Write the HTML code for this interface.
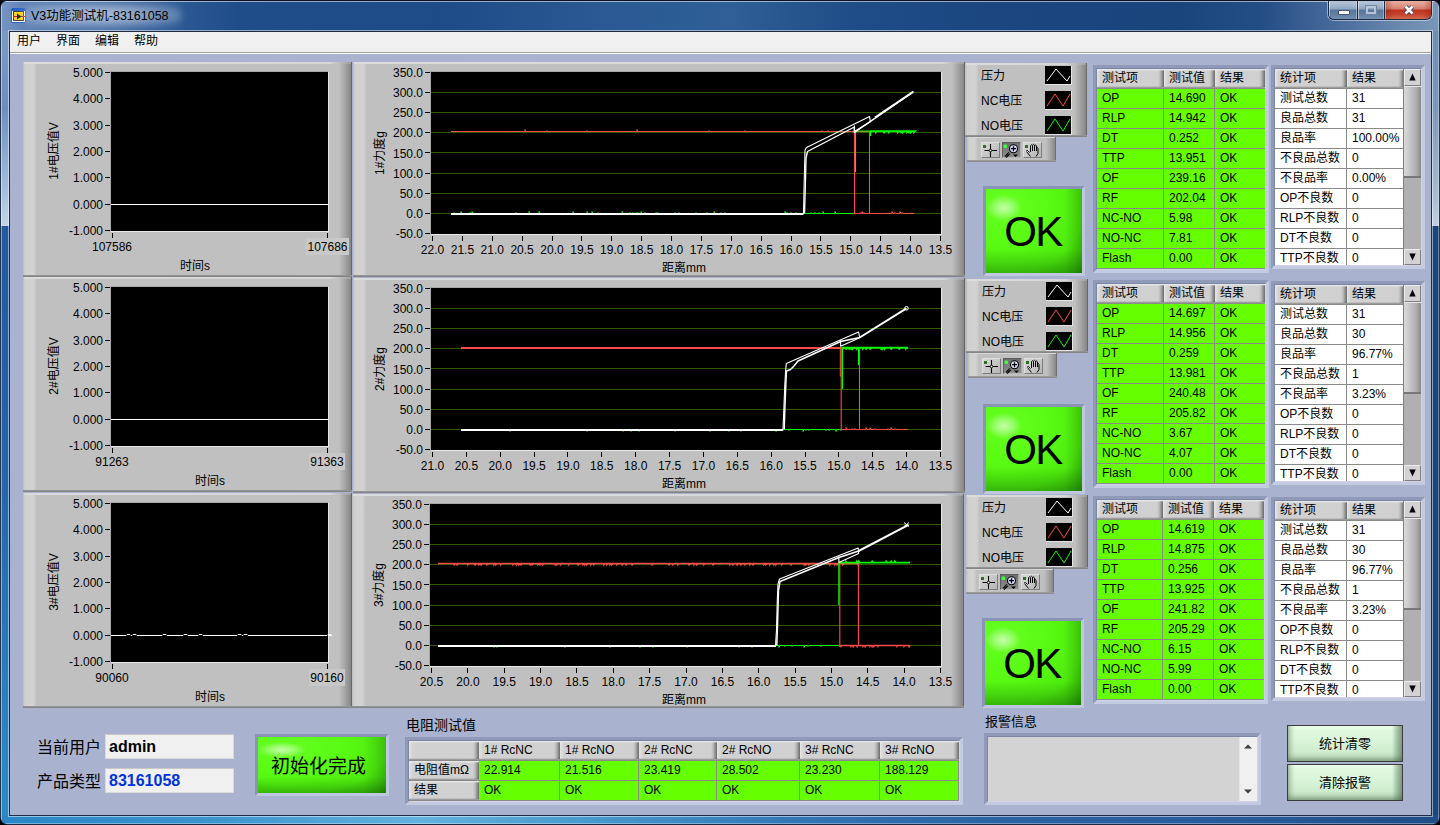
<!DOCTYPE html><html><head><meta charset="utf-8"><title>V3功能测试机-83161058</title><style>
html,body{margin:0;padding:0}
body{width:1440px;height:825px;overflow:hidden;position:relative;background:#1c4478;font-family:"Liberation Sans","Noto Sans CJK SC",sans-serif;font-size:12px;color:#000}
div{position:absolute;box-sizing:border-box}
svg{position:absolute;overflow:visible}
.t{white-space:nowrap}
.tr{white-space:nowrap;text-align:right}
.tc{white-space:nowrap;text-align:center}
.panel{background:#c0c0c0}
.hdr{background:linear-gradient(to right,#e6e6e6 0,#dadada 2px,#d1d1d1 4px,#d0d0d0 calc(100% - 6px),#bdbdbd calc(100% - 4px),#949494 calc(100% - 2px),#6a6a6a 100%);box-shadow:inset 0 1px 0 #e4e4e4,inset 0 2px 0 rgba(255,255,255,.25),inset 0 -1px 0 #9c9c9c,inset 0 -2px 0 rgba(0,0,0,.08);white-space:nowrap;overflow:hidden;font-size:12px;line-height:18px;padding-left:5px}
.cell{white-space:nowrap;overflow:hidden;font-size:12px;line-height:19px;padding-left:5px}
</style></head><body>
<div style="left:0;top:0;width:1440px;height:31px;background:linear-gradient(to right,#7896c4 0,#5e82b6 25px,#4d73aa 110px,#2b5893 185px,#1f4d89 240px,#1d4b87 440px,#2a5993 600px,#2f5f96 730px,#1e4c86 860px,#1b4680 1000px,#1a447c 1180px,#234d85 1260px,#46689a 1330px,#6a89ae 1400px,#7a97b8 1440px)"></div>
<div style="left:0;top:0;width:1440px;height:1px;background:#20304a"></div>
<div style="left:1px;top:1px;width:1438px;height:1px;background:rgba(255,255,255,.55)"></div>
<div style="left:0;top:31px;width:9px;height:195px;background:linear-gradient(to bottom,#7c9ac6 0,#6d8fc0 40%,#a9c2de 85%,#c4d6e8 100%)"></div>
<div style="left:0;top:226px;width:9px;height:599px;background:linear-gradient(to bottom,#23599f 0,#2463ab 40%,#2b80c0 80%,#2c8ac8 100%)"></div>
<div style="left:1431px;top:31px;width:9px;height:195px;background:linear-gradient(to bottom,#6d8db4 0,#7b98ba 40%,#a9bdd3 85%,#c0d0e0 100%)"></div>
<div style="left:1431px;top:226px;width:9px;height:599px;background:#1c4579"></div>
<div style="left:0;top:815px;width:1440px;height:10px;background:linear-gradient(to right,#2b86c6 0,#3a93cd 200px,#62b2de 420px,#4697cc 600px,#3276b4 800px,#2c62a2 1000px,#285a9a 1250px,#1e4c87 1440px)"></div>
<div style="left:0;top:0;width:1px;height:825px;background:#26344e"></div>
<div style="left:1439px;top:0;width:1px;height:825px;background:#26344e"></div>
<div style="left:0;top:824px;width:1440px;height:1px;background:#1a2a44"></div>
<div style="left:1px;top:1px;width:1px;height:823px;background:rgba(255,255,255,.45)"></div>
<div style="left:1438px;top:1px;width:1px;height:823px;background:rgba(255,255,255,.35)"></div>
<div style="left:1px;top:823px;width:1438px;height:1px;background:rgba(255,255,255,.35)"></div>
<div style="left:0px;top:0px;width:7px;height:7px;background:radial-gradient(circle at 100% 100%,rgba(0,0,0,0) 5.5px,rgba(20,28,44,.9) 6.2px,#000 7.2px)"></div>
<div style="left:1433px;top:0px;width:7px;height:7px;background:radial-gradient(circle at 0 100%,rgba(0,0,0,0) 5.5px,rgba(20,28,44,.9) 6.2px,#000 7.2px)"></div>
<div style="left:0px;top:818px;width:7px;height:7px;background:radial-gradient(circle at 100% 0,rgba(0,0,0,0) 5.5px,rgba(20,28,44,.9) 6.2px,#000 7.2px)"></div>
<div style="left:1433px;top:818px;width:7px;height:7px;background:radial-gradient(circle at 0 0,rgba(0,0,0,0) 5.5px,rgba(20,28,44,.9) 6.2px,#000 7.2px)"></div>
<div style="left:9px;top:31px;width:1423px;height:785px;border:1px solid #1e2c44;box-shadow:0 0 0 1px rgba(255,255,255,.5)"></div>
<div style="left:11px;top:8px;width:15px;height:15px;background:#fff;border:1px solid #2a62c8;border-radius:1px"></div>
<div style="left:13px;top:11px;width:11px;height:10px;background:#f4d31c;border:1px solid #444"></div>
<svg style="left:11px;top:8px" width="15" height="15"><path d="M6 5.5 L10.5 8.5 L6 11.5Z" fill="#222"/><path d="M2 8.5H6M10 8.5H14" stroke="#d02020" stroke-width="1"/><rect x="1" y="1" width="13" height="2" fill="#2a62c8"/></svg>
<div style="left:22px;top:4px;width:160px;height:22px;border-radius:11px;background:radial-gradient(ellipse at center,rgba(255,255,255,.55) 0,rgba(255,255,255,.35) 50%,rgba(255,255,255,0) 100%);filter:blur(3px)"></div>
<div class="t" style="left:31px;top:7.8px;font-size:12.5px;line-height:16.5px;color:#000">V3功能测试机-83161058</div>
<div style="left:1328px;top:0;width:104px;height:20px;border:1px solid #1d2c44;border-top:none;border-radius:0 0 6px 6px;overflow:hidden;box-shadow:0 0 0 1px rgba(255,255,255,.45)"><div style="left:0;top:0;width:29px;height:19px;background:linear-gradient(to bottom,#b9c8da 0,#a3b6cd 30%,#8ea5c1 48%,#58769a 52%,#5f7ea2 75%,#7391b2 100%);border-right:1px solid #1d2c44;box-shadow:inset 1px 0 0 rgba(255,255,255,.5),inset -1px 0 0 rgba(255,255,255,.35)"></div><div style="left:29px;top:0;width:27px;height:19px;background:linear-gradient(to bottom,#b9c8da 0,#a3b6cd 30%,#8ea5c1 48%,#58769a 52%,#5f7ea2 75%,#7391b2 100%);border-right:1px solid #1d2c44;box-shadow:inset 1px 0 0 rgba(255,255,255,.5),inset -1px 0 0 rgba(255,255,255,.35)"></div><div style="left:56px;top:0;width:47px;height:19px;background:linear-gradient(to right,rgba(120,20,10,.35) 0,rgba(120,20,10,0) 18%,rgba(120,20,10,0) 82%,rgba(120,20,10,.35) 100%),linear-gradient(to bottom,#eab4a6 0,#de9585 30%,#d47c6b 48%,#bf3423 52%,#c5422c 75%,#d3694a 100%);box-shadow:inset 1px 0 0 rgba(255,255,255,.45),inset -1px 0 0 rgba(255,255,255,.3)"></div></div>
<div style="left:1338px;top:10px;width:12px;height:5px;background:#fff;border:1px solid #47556e;border-radius:1px"></div>
<div style="left:1366px;top:6px;width:10px;height:8px;border:2px solid #bccada;outline:1px solid #71829e;opacity:.9"></div>
<svg style="left:1402px;top:4px" width="14" height="12"><path d="M3.500 2.500 L10.500 9.500 M10.500 2.500 L3.500 9.500" stroke="#3a3f52" stroke-width="4.400" stroke-linecap="butt"/><path d="M3.500 2.500 L10.500 9.500 M10.500 2.500 L3.500 9.500" stroke="#fff" stroke-width="2.600" stroke-linecap="butt"/></svg>
<div style="left:0;top:0;width:1440px;height:1px;background:#0c1220"></div>
<div style="left:10px;top:32px;width:1421px;height:783px;background:#a9b3cf;overflow:hidden"></div>
<div style="left:10px;top:32px;width:1421px;height:20px;background:#f0f0f0"></div>
<div style="left:10px;top:52px;width:1421px;height:1px;background:#a0a0a0"></div>
<div style="left:10px;top:53px;width:1421px;height:1px;background:#fff"></div>
<div class="t" style="left:17px;top:33.0px;font-size:12px;line-height:16px;">用户</div>
<div class="t" style="left:56px;top:33.0px;font-size:12px;line-height:16px;">界面</div>
<div class="t" style="left:95px;top:33.0px;font-size:12px;line-height:16px;">编辑</div>
<div class="t" style="left:134px;top:33.0px;font-size:12px;line-height:16px;">帮助</div>
<div class="panel" style="left:23px;top:62px;width:329px;height:215px;overflow:hidden"><div style="left:0;top:0;width:13px;height:215px;background:linear-gradient(to right,#bcbcbc 0,#d0d0d0 2px,#d3d3d3 10px,#c6c6c6 13px)"></div><div style="left:316px;top:0;width:13px;height:215px;background:linear-gradient(to right,#c0c0c0 0,#a8a8a8 40%,#868686 92%,#4a4a4a 100%)"></div><div style="left:1px;top:0;width:327px;height:2px;background:linear-gradient(to right,#dcdcdc 0,#d6d6d6 306px,#a0a0a0 100%)"></div><div style="left:0;top:213px;width:329px;height:2px;background:linear-gradient(to bottom,#9a9a9a,#7e7e7e)"></div></div>
<div style="left:111px;top:72px;width:217px;height:159px;background:#000"></div>
<div style="left:328px;top:72px;width:1px;height:160px;background:#e6e6e6"></div>
<div style="left:111px;top:231px;width:218px;height:1px;background:#e6e6e6"></div>
<div style="left:110px;top:71px;width:218px;height:1px;background:#a6a6a6"></div>
<div style="left:110px;top:71px;width:1px;height:160px;background:#a6a6a6"></div>
<div class="tr" style="left:42px;top:65.0px;width:61px;height:16px;line-height:16px;font-size:12px">5.000</div>
<div style="left:105px;top:72px;width:5px;height:1px;background:#000"></div>
<div class="tr" style="left:42px;top:91.3px;width:61px;height:16px;line-height:16px;font-size:12px">4.000</div>
<div style="left:105px;top:98px;width:5px;height:1px;background:#000"></div>
<div class="tr" style="left:42px;top:117.7px;width:61px;height:16px;line-height:16px;font-size:12px">3.000</div>
<div style="left:105px;top:125px;width:5px;height:1px;background:#000"></div>
<div class="tr" style="left:42px;top:144.0px;width:61px;height:16px;line-height:16px;font-size:12px">2.000</div>
<div style="left:105px;top:151px;width:5px;height:1px;background:#000"></div>
<div class="tr" style="left:42px;top:170.3px;width:61px;height:16px;line-height:16px;font-size:12px">1.000</div>
<div style="left:105px;top:177px;width:5px;height:1px;background:#000"></div>
<div class="tr" style="left:42px;top:196.7px;width:61px;height:16px;line-height:16px;font-size:12px">0.000</div>
<div style="left:105px;top:204px;width:5px;height:1px;background:#000"></div>
<div class="tr" style="left:42px;top:223.0px;width:61px;height:16px;line-height:16px;font-size:12px">-1.000</div>
<div style="left:105px;top:230px;width:5px;height:1px;background:#000"></div>
<div style="left:111px;top:204px;width:217px;height:1px;background:#fff"></div>
<div style="left:112px;top:233px;width:1px;height:5px;background:#000"></div>
<div style="left:327px;top:233px;width:1px;height:5px;background:#000"></div>
<div class="tc" style="left:82px;top:239px;width:60px;height:16px;line-height:16px;font-size:12px">107586</div>
<div class="tc" style="left:306px;top:238px;width:43px;height:17px;line-height:18px;font-size:12px;background:#c8c8c8">107686</div>
<div class="tc" style="left:165px;top:258px;width:60px;height:16px;line-height:16px;font-size:12px">时间s</div>
<div class="tc" style="left:-6px;top:143px;width:120px;height:16px;line-height:16px;font-size:12px;transform:rotate(-90deg)">1#电压值V</div>
<div class="panel" style="left:23px;top:277px;width:329px;height:215px;overflow:hidden"><div style="left:0;top:0;width:13px;height:215px;background:linear-gradient(to right,#bcbcbc 0,#d0d0d0 2px,#d3d3d3 10px,#c6c6c6 13px)"></div><div style="left:316px;top:0;width:13px;height:215px;background:linear-gradient(to right,#c0c0c0 0,#a8a8a8 40%,#868686 92%,#4a4a4a 100%)"></div><div style="left:1px;top:0;width:327px;height:2px;background:linear-gradient(to right,#dcdcdc 0,#d6d6d6 306px,#a0a0a0 100%)"></div><div style="left:0;top:213px;width:329px;height:2px;background:linear-gradient(to bottom,#9a9a9a,#7e7e7e)"></div></div>
<div style="left:111px;top:287px;width:217px;height:159px;background:#000"></div>
<div style="left:328px;top:287px;width:1px;height:160px;background:#e6e6e6"></div>
<div style="left:111px;top:446px;width:218px;height:1px;background:#e6e6e6"></div>
<div style="left:110px;top:286px;width:218px;height:1px;background:#a6a6a6"></div>
<div style="left:110px;top:286px;width:1px;height:160px;background:#a6a6a6"></div>
<div class="tr" style="left:42px;top:280.0px;width:61px;height:16px;line-height:16px;font-size:12px">5.000</div>
<div style="left:105px;top:287px;width:5px;height:1px;background:#000"></div>
<div class="tr" style="left:42px;top:306.3px;width:61px;height:16px;line-height:16px;font-size:12px">4.000</div>
<div style="left:105px;top:313px;width:5px;height:1px;background:#000"></div>
<div class="tr" style="left:42px;top:332.7px;width:61px;height:16px;line-height:16px;font-size:12px">3.000</div>
<div style="left:105px;top:340px;width:5px;height:1px;background:#000"></div>
<div class="tr" style="left:42px;top:359.0px;width:61px;height:16px;line-height:16px;font-size:12px">2.000</div>
<div style="left:105px;top:366px;width:5px;height:1px;background:#000"></div>
<div class="tr" style="left:42px;top:385.3px;width:61px;height:16px;line-height:16px;font-size:12px">1.000</div>
<div style="left:105px;top:392px;width:5px;height:1px;background:#000"></div>
<div class="tr" style="left:42px;top:411.7px;width:61px;height:16px;line-height:16px;font-size:12px">0.000</div>
<div style="left:105px;top:419px;width:5px;height:1px;background:#000"></div>
<div class="tr" style="left:42px;top:438.0px;width:61px;height:16px;line-height:16px;font-size:12px">-1.000</div>
<div style="left:105px;top:445px;width:5px;height:1px;background:#000"></div>
<div style="left:111px;top:419px;width:217px;height:1px;background:#fff"></div>
<div style="left:112px;top:448px;width:1px;height:5px;background:#000"></div>
<div style="left:327px;top:448px;width:1px;height:5px;background:#000"></div>
<div class="tc" style="left:82px;top:454px;width:60px;height:16px;line-height:16px;font-size:12px">91263</div>
<div class="tc" style="left:309px;top:453px;width:36px;height:17px;line-height:18px;font-size:12px;background:#c8c8c8">91363</div>
<div class="tc" style="left:180px;top:473px;width:60px;height:16px;line-height:16px;font-size:12px">时间s</div>
<div class="tc" style="left:-6px;top:358px;width:120px;height:16px;line-height:16px;font-size:12px;transform:rotate(-90deg)">2#电压值V</div>
<div class="panel" style="left:23px;top:493px;width:329px;height:215px;overflow:hidden"><div style="left:0;top:0;width:13px;height:215px;background:linear-gradient(to right,#bcbcbc 0,#d0d0d0 2px,#d3d3d3 10px,#c6c6c6 13px)"></div><div style="left:316px;top:0;width:13px;height:215px;background:linear-gradient(to right,#c0c0c0 0,#a8a8a8 40%,#868686 92%,#4a4a4a 100%)"></div><div style="left:1px;top:0;width:327px;height:2px;background:linear-gradient(to right,#dcdcdc 0,#d6d6d6 306px,#a0a0a0 100%)"></div><div style="left:0;top:213px;width:329px;height:2px;background:linear-gradient(to bottom,#9a9a9a,#7e7e7e)"></div></div>
<div style="left:111px;top:503px;width:217px;height:159px;background:#000"></div>
<div style="left:328px;top:503px;width:1px;height:160px;background:#e6e6e6"></div>
<div style="left:111px;top:662px;width:218px;height:1px;background:#e6e6e6"></div>
<div style="left:110px;top:502px;width:218px;height:1px;background:#a6a6a6"></div>
<div style="left:110px;top:502px;width:1px;height:160px;background:#a6a6a6"></div>
<div class="tr" style="left:42px;top:496.0px;width:61px;height:16px;line-height:16px;font-size:12px">5.000</div>
<div style="left:105px;top:503px;width:5px;height:1px;background:#000"></div>
<div class="tr" style="left:42px;top:522.3px;width:61px;height:16px;line-height:16px;font-size:12px">4.000</div>
<div style="left:105px;top:529px;width:5px;height:1px;background:#000"></div>
<div class="tr" style="left:42px;top:548.7px;width:61px;height:16px;line-height:16px;font-size:12px">3.000</div>
<div style="left:105px;top:556px;width:5px;height:1px;background:#000"></div>
<div class="tr" style="left:42px;top:575.0px;width:61px;height:16px;line-height:16px;font-size:12px">2.000</div>
<div style="left:105px;top:582px;width:5px;height:1px;background:#000"></div>
<div class="tr" style="left:42px;top:601.3px;width:61px;height:16px;line-height:16px;font-size:12px">1.000</div>
<div style="left:105px;top:608px;width:5px;height:1px;background:#000"></div>
<div class="tr" style="left:42px;top:627.7px;width:61px;height:16px;line-height:16px;font-size:12px">0.000</div>
<div style="left:105px;top:635px;width:5px;height:1px;background:#000"></div>
<div class="tr" style="left:42px;top:654.0px;width:61px;height:16px;line-height:16px;font-size:12px">-1.000</div>
<div style="left:105px;top:661px;width:5px;height:1px;background:#000"></div>
<svg style="left:0;top:0" width="1440" height="825"><polyline points="111,635.5 114,635.5 117,635.5 120,635.5 123,635.5 126,635.5 127,634.5 130,634.5 131,635.5 132,635.5 133,634.5 136,634.5 137,635.5 138,635.5 141,635.5 144,635.5 147,635.5 150,635.5 153,635.5 156,635.5 159,635.5 162,635.5 163,634.5 166,634.5 167,635.5 168,635.5 171,635.5 174,635.5 177,635.5 180,635.5 183,635.5 184,634.5 187,634.5 188,635.5 189,635.5 192,635.5 195,635.5 198,635.5 199,634.5 202,634.5 203,635.5 204,635.5 207,635.5 210,635.5 213,635.5 216,635.5 219,635.5 222,635.5 225,635.5 228,635.5 231,635.5 234,635.5 237,635.5 238,634.5 241,634.5 242,635.5 243,635.5 244,634.5 247,634.5 248,635.5 249,635.5 252,635.5 255,635.5 258,635.5 261,635.5 264,635.5 267,635.5 270,635.5 273,635.5 276,635.5 279,635.5 282,635.5 285,635.5 288,635.5 291,635.5 294,635.5 297,635.5 300,635.5 303,635.5 306,635.5 309,635.5 312,635.5 315,635.5 318,635.5 321,635.5 324,635.5 327,635.5 328,634.5 331,634.5 332,635.5 328,635.5" fill="none" stroke="#fff" stroke-width="1"/></svg>
<div style="left:112px;top:664px;width:1px;height:5px;background:#000"></div>
<div style="left:327px;top:664px;width:1px;height:5px;background:#000"></div>
<div class="tc" style="left:82px;top:670px;width:60px;height:16px;line-height:16px;font-size:12px">90060</div>
<div class="tc" style="left:309px;top:669px;width:36px;height:17px;line-height:18px;font-size:12px;background:#c8c8c8">90160</div>
<div class="tc" style="left:180px;top:689px;width:60px;height:16px;line-height:16px;font-size:12px">时间s</div>
<div class="tc" style="left:-6px;top:574px;width:120px;height:16px;line-height:16px;font-size:12px;transform:rotate(-90deg)">3#电压值V</div>
<div class="panel" style="left:353px;top:62px;width:612px;height:215px;overflow:hidden"><div style="left:0;top:0;width:13px;height:215px;background:linear-gradient(to right,#bcbcbc 0,#d0d0d0 2px,#d3d3d3 10px,#c6c6c6 13px)"></div><div style="left:599px;top:0;width:13px;height:215px;background:linear-gradient(to right,#c0c0c0 0,#a8a8a8 40%,#868686 92%,#4a4a4a 100%)"></div><div style="left:1px;top:0;width:610px;height:2px;background:linear-gradient(to right,#dcdcdc 0,#d6d6d6 589px,#a0a0a0 100%)"></div><div style="left:0;top:213px;width:612px;height:2px;background:linear-gradient(to bottom,#9a9a9a,#7e7e7e)"></div></div>
<div style="left:431px;top:72px;width:510px;height:162px;background:#000"></div>
<div style="left:941px;top:72px;width:1px;height:163px;background:#e6e6e6"></div>
<div style="left:431px;top:234px;width:511px;height:1px;background:#e6e6e6"></div>
<div style="left:430px;top:71px;width:511px;height:1px;background:#a6a6a6"></div>
<div style="left:430px;top:71px;width:1px;height:163px;background:#a6a6a6"></div>
<div class="tr" style="left:363px;top:65.0px;width:60px;height:16px;line-height:16px;font-size:12px">350.0</div>
<div style="left:425px;top:72px;width:5px;height:1px;background:#000"></div>
<div class="tr" style="left:363px;top:85.1px;width:60px;height:16px;line-height:16px;font-size:12px">300.0</div>
<div style="left:425px;top:92px;width:5px;height:1px;background:#000"></div>
<div style="left:431px;top:92px;width:510px;height:1px;background:#2b5a00"></div>
<div class="tr" style="left:363px;top:105.2px;width:60px;height:16px;line-height:16px;font-size:12px">250.0</div>
<div style="left:425px;top:112px;width:5px;height:1px;background:#000"></div>
<div style="left:431px;top:112px;width:510px;height:1px;background:#2b5a00"></div>
<div class="tr" style="left:363px;top:125.4px;width:60px;height:16px;line-height:16px;font-size:12px">200.0</div>
<div style="left:425px;top:132px;width:5px;height:1px;background:#000"></div>
<div style="left:431px;top:132px;width:510px;height:1px;background:#2b5a00"></div>
<div class="tr" style="left:363px;top:145.5px;width:60px;height:16px;line-height:16px;font-size:12px">150.0</div>
<div style="left:425px;top:152px;width:5px;height:1px;background:#000"></div>
<div style="left:431px;top:152px;width:510px;height:1px;background:#2b5a00"></div>
<div class="tr" style="left:363px;top:165.6px;width:60px;height:16px;line-height:16px;font-size:12px">100.0</div>
<div style="left:425px;top:173px;width:5px;height:1px;background:#000"></div>
<div style="left:431px;top:173px;width:510px;height:1px;background:#2b5a00"></div>
<div class="tr" style="left:363px;top:185.8px;width:60px;height:16px;line-height:16px;font-size:12px">50.0</div>
<div style="left:425px;top:193px;width:5px;height:1px;background:#000"></div>
<div style="left:431px;top:193px;width:510px;height:1px;background:#2b5a00"></div>
<div class="tr" style="left:363px;top:205.9px;width:60px;height:16px;line-height:16px;font-size:12px">0.0</div>
<div style="left:425px;top:213px;width:5px;height:1px;background:#000"></div>
<div style="left:431px;top:213px;width:510px;height:1px;background:#2b5a00"></div>
<div class="tr" style="left:363px;top:226.0px;width:60px;height:16px;line-height:16px;font-size:12px">-50.0</div>
<div style="left:425px;top:233px;width:5px;height:1px;background:#000"></div>
<div style="left:432px;top:236px;width:1px;height:5px;background:#000"></div>
<div class="tc" style="left:412.5px;top:242px;width:40px;height:16px;line-height:16px;font-size:12px">22.0</div>
<div style="left:462px;top:236px;width:1px;height:5px;background:#000"></div>
<div class="tc" style="left:442.4px;top:242px;width:40px;height:16px;line-height:16px;font-size:12px">21.5</div>
<div style="left:492px;top:236px;width:1px;height:5px;background:#000"></div>
<div class="tc" style="left:472.3px;top:242px;width:40px;height:16px;line-height:16px;font-size:12px">21.0</div>
<div style="left:522px;top:236px;width:1px;height:5px;background:#000"></div>
<div class="tc" style="left:502.1px;top:242px;width:40px;height:16px;line-height:16px;font-size:12px">20.5</div>
<div style="left:552px;top:236px;width:1px;height:5px;background:#000"></div>
<div class="tc" style="left:532.0px;top:242px;width:40px;height:16px;line-height:16px;font-size:12px">20.0</div>
<div style="left:581px;top:236px;width:1px;height:5px;background:#000"></div>
<div class="tc" style="left:561.9px;top:242px;width:40px;height:16px;line-height:16px;font-size:12px">19.5</div>
<div style="left:611px;top:236px;width:1px;height:5px;background:#000"></div>
<div class="tc" style="left:591.8px;top:242px;width:40px;height:16px;line-height:16px;font-size:12px">19.0</div>
<div style="left:641px;top:236px;width:1px;height:5px;background:#000"></div>
<div class="tc" style="left:621.7px;top:242px;width:40px;height:16px;line-height:16px;font-size:12px">18.5</div>
<div style="left:671px;top:236px;width:1px;height:5px;background:#000"></div>
<div class="tc" style="left:651.6px;top:242px;width:40px;height:16px;line-height:16px;font-size:12px">18.0</div>
<div style="left:701px;top:236px;width:1px;height:5px;background:#000"></div>
<div class="tc" style="left:681.4px;top:242px;width:40px;height:16px;line-height:16px;font-size:12px">17.5</div>
<div style="left:731px;top:236px;width:1px;height:5px;background:#000"></div>
<div class="tc" style="left:711.3px;top:242px;width:40px;height:16px;line-height:16px;font-size:12px">17.0</div>
<div style="left:761px;top:236px;width:1px;height:5px;background:#000"></div>
<div class="tc" style="left:741.2px;top:242px;width:40px;height:16px;line-height:16px;font-size:12px">16.5</div>
<div style="left:791px;top:236px;width:1px;height:5px;background:#000"></div>
<div class="tc" style="left:771.1px;top:242px;width:40px;height:16px;line-height:16px;font-size:12px">16.0</div>
<div style="left:820px;top:236px;width:1px;height:5px;background:#000"></div>
<div class="tc" style="left:801.0px;top:242px;width:40px;height:16px;line-height:16px;font-size:12px">15.5</div>
<div style="left:850px;top:236px;width:1px;height:5px;background:#000"></div>
<div class="tc" style="left:830.9px;top:242px;width:40px;height:16px;line-height:16px;font-size:12px">15.0</div>
<div style="left:880px;top:236px;width:1px;height:5px;background:#000"></div>
<div class="tc" style="left:860.7px;top:242px;width:40px;height:16px;line-height:16px;font-size:12px">14.5</div>
<div style="left:910px;top:236px;width:1px;height:5px;background:#000"></div>
<div class="tc" style="left:890.6px;top:242px;width:40px;height:16px;line-height:16px;font-size:12px">14.0</div>
<div style="left:940px;top:236px;width:1px;height:5px;background:#000"></div>
<div class="tc" style="left:920.5px;top:242px;width:40px;height:16px;line-height:16px;font-size:12px">13.5</div>
<div class="t" style="left:662px;top:260px;height:16px;line-height:16px;font-size:12px">距离mm</div>
<div class="tc" style="left:320px;top:145px;width:120px;height:16px;line-height:16px;font-size:12px;transform:rotate(-90deg)">1#力度g</div>
<div class="panel" style="left:353px;top:278px;width:612px;height:215px;overflow:hidden"><div style="left:0;top:0;width:13px;height:215px;background:linear-gradient(to right,#bcbcbc 0,#d0d0d0 2px,#d3d3d3 10px,#c6c6c6 13px)"></div><div style="left:599px;top:0;width:13px;height:215px;background:linear-gradient(to right,#c0c0c0 0,#a8a8a8 40%,#868686 92%,#4a4a4a 100%)"></div><div style="left:1px;top:0;width:610px;height:2px;background:linear-gradient(to right,#dcdcdc 0,#d6d6d6 589px,#a0a0a0 100%)"></div><div style="left:0;top:213px;width:612px;height:2px;background:linear-gradient(to bottom,#9a9a9a,#7e7e7e)"></div></div>
<div style="left:431px;top:288px;width:510px;height:162px;background:#000"></div>
<div style="left:941px;top:288px;width:1px;height:163px;background:#e6e6e6"></div>
<div style="left:431px;top:450px;width:511px;height:1px;background:#e6e6e6"></div>
<div style="left:430px;top:287px;width:511px;height:1px;background:#a6a6a6"></div>
<div style="left:430px;top:287px;width:1px;height:163px;background:#a6a6a6"></div>
<div class="tr" style="left:363px;top:281.0px;width:60px;height:16px;line-height:16px;font-size:12px">350.0</div>
<div style="left:425px;top:288px;width:5px;height:1px;background:#000"></div>
<div class="tr" style="left:363px;top:301.1px;width:60px;height:16px;line-height:16px;font-size:12px">300.0</div>
<div style="left:425px;top:308px;width:5px;height:1px;background:#000"></div>
<div style="left:431px;top:308px;width:510px;height:1px;background:#2b5a00"></div>
<div class="tr" style="left:363px;top:321.2px;width:60px;height:16px;line-height:16px;font-size:12px">250.0</div>
<div style="left:425px;top:328px;width:5px;height:1px;background:#000"></div>
<div style="left:431px;top:328px;width:510px;height:1px;background:#2b5a00"></div>
<div class="tr" style="left:363px;top:341.4px;width:60px;height:16px;line-height:16px;font-size:12px">200.0</div>
<div style="left:425px;top:348px;width:5px;height:1px;background:#000"></div>
<div style="left:431px;top:348px;width:510px;height:1px;background:#2b5a00"></div>
<div class="tr" style="left:363px;top:361.5px;width:60px;height:16px;line-height:16px;font-size:12px">150.0</div>
<div style="left:425px;top:368px;width:5px;height:1px;background:#000"></div>
<div style="left:431px;top:368px;width:510px;height:1px;background:#2b5a00"></div>
<div class="tr" style="left:363px;top:381.6px;width:60px;height:16px;line-height:16px;font-size:12px">100.0</div>
<div style="left:425px;top:389px;width:5px;height:1px;background:#000"></div>
<div style="left:431px;top:389px;width:510px;height:1px;background:#2b5a00"></div>
<div class="tr" style="left:363px;top:401.8px;width:60px;height:16px;line-height:16px;font-size:12px">50.0</div>
<div style="left:425px;top:409px;width:5px;height:1px;background:#000"></div>
<div style="left:431px;top:409px;width:510px;height:1px;background:#2b5a00"></div>
<div class="tr" style="left:363px;top:421.9px;width:60px;height:16px;line-height:16px;font-size:12px">0.0</div>
<div style="left:425px;top:429px;width:5px;height:1px;background:#000"></div>
<div style="left:431px;top:429px;width:510px;height:1px;background:#2b5a00"></div>
<div class="tr" style="left:363px;top:442.0px;width:60px;height:16px;line-height:16px;font-size:12px">-50.0</div>
<div style="left:425px;top:449px;width:5px;height:1px;background:#000"></div>
<div style="left:432px;top:452px;width:1px;height:5px;background:#000"></div>
<div class="tc" style="left:412.5px;top:458px;width:40px;height:16px;line-height:16px;font-size:12px">21.0</div>
<div style="left:466px;top:452px;width:1px;height:5px;background:#000"></div>
<div class="tc" style="left:446.4px;top:458px;width:40px;height:16px;line-height:16px;font-size:12px">20.5</div>
<div style="left:500px;top:452px;width:1px;height:5px;background:#000"></div>
<div class="tc" style="left:480.2px;top:458px;width:40px;height:16px;line-height:16px;font-size:12px">20.0</div>
<div style="left:534px;top:452px;width:1px;height:5px;background:#000"></div>
<div class="tc" style="left:514.1px;top:458px;width:40px;height:16px;line-height:16px;font-size:12px">19.5</div>
<div style="left:567px;top:452px;width:1px;height:5px;background:#000"></div>
<div class="tc" style="left:548.0px;top:458px;width:40px;height:16px;line-height:16px;font-size:12px">19.0</div>
<div style="left:601px;top:452px;width:1px;height:5px;background:#000"></div>
<div class="tc" style="left:581.8px;top:458px;width:40px;height:16px;line-height:16px;font-size:12px">18.5</div>
<div style="left:635px;top:452px;width:1px;height:5px;background:#000"></div>
<div class="tc" style="left:615.7px;top:458px;width:40px;height:16px;line-height:16px;font-size:12px">18.0</div>
<div style="left:669px;top:452px;width:1px;height:5px;background:#000"></div>
<div class="tc" style="left:649.6px;top:458px;width:40px;height:16px;line-height:16px;font-size:12px">17.5</div>
<div style="left:703px;top:452px;width:1px;height:5px;background:#000"></div>
<div class="tc" style="left:683.4px;top:458px;width:40px;height:16px;line-height:16px;font-size:12px">17.0</div>
<div style="left:737px;top:452px;width:1px;height:5px;background:#000"></div>
<div class="tc" style="left:717.3px;top:458px;width:40px;height:16px;line-height:16px;font-size:12px">16.5</div>
<div style="left:771px;top:452px;width:1px;height:5px;background:#000"></div>
<div class="tc" style="left:751.2px;top:458px;width:40px;height:16px;line-height:16px;font-size:12px">16.0</div>
<div style="left:805px;top:452px;width:1px;height:5px;background:#000"></div>
<div class="tc" style="left:785.0px;top:458px;width:40px;height:16px;line-height:16px;font-size:12px">15.5</div>
<div style="left:838px;top:452px;width:1px;height:5px;background:#000"></div>
<div class="tc" style="left:818.9px;top:458px;width:40px;height:16px;line-height:16px;font-size:12px">15.0</div>
<div style="left:872px;top:452px;width:1px;height:5px;background:#000"></div>
<div class="tc" style="left:852.8px;top:458px;width:40px;height:16px;line-height:16px;font-size:12px">14.5</div>
<div style="left:906px;top:452px;width:1px;height:5px;background:#000"></div>
<div class="tc" style="left:886.6px;top:458px;width:40px;height:16px;line-height:16px;font-size:12px">14.0</div>
<div style="left:940px;top:452px;width:1px;height:5px;background:#000"></div>
<div class="tc" style="left:920.5px;top:458px;width:40px;height:16px;line-height:16px;font-size:12px">13.5</div>
<div class="t" style="left:662px;top:476px;height:16px;line-height:16px;font-size:12px">距离mm</div>
<div class="tc" style="left:320px;top:361px;width:120px;height:16px;line-height:16px;font-size:12px;transform:rotate(-90deg)">2#力度g</div>
<div class="panel" style="left:352px;top:494px;width:612px;height:214px;overflow:hidden"><div style="left:0;top:0;width:13px;height:214px;background:linear-gradient(to right,#bcbcbc 0,#d0d0d0 2px,#d3d3d3 10px,#c6c6c6 13px)"></div><div style="left:599px;top:0;width:13px;height:214px;background:linear-gradient(to right,#c0c0c0 0,#a8a8a8 40%,#868686 92%,#4a4a4a 100%)"></div><div style="left:1px;top:0;width:610px;height:2px;background:linear-gradient(to right,#dcdcdc 0,#d6d6d6 589px,#a0a0a0 100%)"></div><div style="left:0;top:212px;width:612px;height:2px;background:linear-gradient(to bottom,#9a9a9a,#7e7e7e)"></div></div>
<div style="left:430px;top:504px;width:511px;height:162px;background:#000"></div>
<div style="left:941px;top:504px;width:1px;height:163px;background:#e6e6e6"></div>
<div style="left:430px;top:666px;width:512px;height:1px;background:#e6e6e6"></div>
<div style="left:429px;top:503px;width:512px;height:1px;background:#a6a6a6"></div>
<div style="left:429px;top:503px;width:1px;height:163px;background:#a6a6a6"></div>
<div class="tr" style="left:362px;top:497.0px;width:60px;height:16px;line-height:16px;font-size:12px">350.0</div>
<div style="left:424px;top:504px;width:5px;height:1px;background:#000"></div>
<div class="tr" style="left:362px;top:517.1px;width:60px;height:16px;line-height:16px;font-size:12px">300.0</div>
<div style="left:424px;top:524px;width:5px;height:1px;background:#000"></div>
<div style="left:430px;top:524px;width:511px;height:1px;background:#2b5a00"></div>
<div class="tr" style="left:362px;top:537.2px;width:60px;height:16px;line-height:16px;font-size:12px">250.0</div>
<div style="left:424px;top:544px;width:5px;height:1px;background:#000"></div>
<div style="left:430px;top:544px;width:511px;height:1px;background:#2b5a00"></div>
<div class="tr" style="left:362px;top:557.4px;width:60px;height:16px;line-height:16px;font-size:12px">200.0</div>
<div style="left:424px;top:564px;width:5px;height:1px;background:#000"></div>
<div style="left:430px;top:564px;width:511px;height:1px;background:#2b5a00"></div>
<div class="tr" style="left:362px;top:577.5px;width:60px;height:16px;line-height:16px;font-size:12px">150.0</div>
<div style="left:424px;top:584px;width:5px;height:1px;background:#000"></div>
<div style="left:430px;top:584px;width:511px;height:1px;background:#2b5a00"></div>
<div class="tr" style="left:362px;top:597.6px;width:60px;height:16px;line-height:16px;font-size:12px">100.0</div>
<div style="left:424px;top:605px;width:5px;height:1px;background:#000"></div>
<div style="left:430px;top:605px;width:511px;height:1px;background:#2b5a00"></div>
<div class="tr" style="left:362px;top:617.8px;width:60px;height:16px;line-height:16px;font-size:12px">50.0</div>
<div style="left:424px;top:625px;width:5px;height:1px;background:#000"></div>
<div style="left:430px;top:625px;width:511px;height:1px;background:#2b5a00"></div>
<div class="tr" style="left:362px;top:637.9px;width:60px;height:16px;line-height:16px;font-size:12px">0.0</div>
<div style="left:424px;top:645px;width:5px;height:1px;background:#000"></div>
<div style="left:430px;top:645px;width:511px;height:1px;background:#2b5a00"></div>
<div class="tr" style="left:362px;top:658.0px;width:60px;height:16px;line-height:16px;font-size:12px">-50.0</div>
<div style="left:424px;top:665px;width:5px;height:1px;background:#000"></div>
<div style="left:431px;top:668px;width:1px;height:5px;background:#000"></div>
<div class="tc" style="left:411.5px;top:674px;width:40px;height:16px;line-height:16px;font-size:12px">20.5</div>
<div style="left:467px;top:668px;width:1px;height:5px;background:#000"></div>
<div class="tc" style="left:447.9px;top:674px;width:40px;height:16px;line-height:16px;font-size:12px">20.0</div>
<div style="left:504px;top:668px;width:1px;height:5px;background:#000"></div>
<div class="tc" style="left:484.2px;top:674px;width:40px;height:16px;line-height:16px;font-size:12px">19.5</div>
<div style="left:540px;top:668px;width:1px;height:5px;background:#000"></div>
<div class="tc" style="left:520.6px;top:674px;width:40px;height:16px;line-height:16px;font-size:12px">19.0</div>
<div style="left:576px;top:668px;width:1px;height:5px;background:#000"></div>
<div class="tc" style="left:556.9px;top:674px;width:40px;height:16px;line-height:16px;font-size:12px">18.5</div>
<div style="left:613px;top:668px;width:1px;height:5px;background:#000"></div>
<div class="tc" style="left:593.3px;top:674px;width:40px;height:16px;line-height:16px;font-size:12px">18.0</div>
<div style="left:649px;top:668px;width:1px;height:5px;background:#000"></div>
<div class="tc" style="left:629.6px;top:674px;width:40px;height:16px;line-height:16px;font-size:12px">17.5</div>
<div style="left:686px;top:668px;width:1px;height:5px;background:#000"></div>
<div class="tc" style="left:666.0px;top:674px;width:40px;height:16px;line-height:16px;font-size:12px">17.0</div>
<div style="left:722px;top:668px;width:1px;height:5px;background:#000"></div>
<div class="tc" style="left:702.4px;top:674px;width:40px;height:16px;line-height:16px;font-size:12px">16.5</div>
<div style="left:758px;top:668px;width:1px;height:5px;background:#000"></div>
<div class="tc" style="left:738.7px;top:674px;width:40px;height:16px;line-height:16px;font-size:12px">16.0</div>
<div style="left:795px;top:668px;width:1px;height:5px;background:#000"></div>
<div class="tc" style="left:775.1px;top:674px;width:40px;height:16px;line-height:16px;font-size:12px">15.5</div>
<div style="left:831px;top:668px;width:1px;height:5px;background:#000"></div>
<div class="tc" style="left:811.4px;top:674px;width:40px;height:16px;line-height:16px;font-size:12px">15.0</div>
<div style="left:867px;top:668px;width:1px;height:5px;background:#000"></div>
<div class="tc" style="left:847.8px;top:674px;width:40px;height:16px;line-height:16px;font-size:12px">14.5</div>
<div style="left:904px;top:668px;width:1px;height:5px;background:#000"></div>
<div class="tc" style="left:884.1px;top:674px;width:40px;height:16px;line-height:16px;font-size:12px">14.0</div>
<div style="left:940px;top:668px;width:1px;height:5px;background:#000"></div>
<div class="tc" style="left:920.5px;top:674px;width:40px;height:16px;line-height:16px;font-size:12px">13.5</div>
<div class="t" style="left:662px;top:692px;height:16px;line-height:16px;font-size:12px">距离mm</div>
<div class="tc" style="left:319px;top:577px;width:120px;height:16px;line-height:16px;font-size:12px;transform:rotate(-90deg)">3#力度g</div>
<svg style="left:0;top:0" width="1440" height="825" shape-rendering="auto"><polyline points="451.0,213.5 454.0,213.5 454.0,212.5 455.0,213.5 461.0,213.5 461.0,211.5 462.0,213.5 470.0,213.5 470.0,212.5 471.0,213.5 472.0,213.5 472.0,211.5 473.0,213.5 516.0,213.5 516.0,212.5 517.0,213.5 529.0,213.5 529.0,211.5 530.0,213.5 539.0,213.5 539.0,211.5 540.0,213.5 573.0,213.5 573.0,211.5 574.0,213.5 587.0,213.5 587.0,211.5 588.0,213.5 592.0,213.5 592.0,211.5 593.0,213.5 598.0,213.5 598.0,212.5 599.0,213.5 622.0,213.5 622.0,211.5 623.0,213.5 630.0,213.5 630.0,212.5 631.0,213.5 633.0,213.5 633.0,212.5 634.0,213.5 636.0,213.5 636.0,212.5 637.0,213.5 638.0,213.5 638.0,212.5 639.0,213.5 641.0,213.5 641.0,211.5 642.0,213.5 645.0,213.5 645.0,212.5 646.0,213.5 656.0,213.5 656.0,212.5 657.0,213.5 658.0,213.5 658.0,212.5 659.0,213.5 675.0,213.5 675.0,212.5 676.0,213.5 679.0,213.5 679.0,212.5 680.0,213.5 696.0,213.5 696.0,212.5 697.0,213.5 707.0,213.5 707.0,212.5 708.0,213.5 714.0,213.5 714.0,211.5 715.0,213.5 721.0,213.5 721.0,212.5 722.0,213.5 725.0,213.5 725.0,212.5 726.0,213.5 785.0,213.5 785.0,211.5 786.0,213.5 787.0,213.5 787.0,212.5 788.0,213.5 791.0,213.5 791.0,212.5 792.0,213.5 796.0,213.5 796.0,212.5 797.0,213.5 811.0,213.5 811.0,212.5 812.0,213.5 815.0,213.5 815.0,212.5 816.0,213.5 819.0,213.5 819.0,212.5 820.0,213.5 823.0,213.5 823.0,211.5 824.0,213.5 835.0,213.5 835.0,211.5 836.0,213.5 854.0,213.5" fill="none" stroke="#00ff00" stroke-width="1"/><polyline points="451.0,131.5 525.0,131.5 525.0,129.5 526.0,131.5 547.0,131.5 547.0,130.5 548.0,131.5 587.0,131.5 587.0,130.5 588.0,131.5 637.0,131.5 637.0,129.5 638.0,131.5 709.0,131.5 709.0,130.5 710.0,131.5 745.0,131.5 745.0,130.5 746.0,131.5 822.0,131.5 822.0,130.5 823.0,131.5 828.0,131.5 828.0,130.5 829.0,131.5 854.0,131.5" fill="none" stroke="#ff4a4a" stroke-width="1"/><polyline points="451.0,131.5 869.5,131.5 869.5,213.5 854.5,213.5 854.5,131.5" fill="none" stroke="#ff4a4a" stroke-width="1.1" stroke-linejoin="round"/><polyline points="854.0,213.5 860.0,213.5 860.0,212.5 861.0,213.5 862.0,213.5 862.0,211.5 863.0,213.5 864.0,213.5 864.0,212.5 865.0,213.5 892.0,213.5 892.0,211.5 893.0,213.5 895.0,213.5 895.0,212.5 896.0,213.5 900.0,213.5 900.0,211.5 901.0,213.5 902.0,213.5 902.0,212.5 903.0,213.5 914.0,213.5" fill="none" stroke="#ff4a4a" stroke-width="1"/><polyline points="855.5,172.0 855.5,131.0 870.0,131.0" fill="none" stroke="#00ff00" stroke-width="1" stroke-linejoin="round"/><polyline points="870.0,131.2 876.0,131.2 876.0,132.2 877.0,131.2 884.0,131.2 884.0,133.2 885.0,131.2 889.0,131.2 889.0,132.2 890.0,131.2 898.0,131.2 898.0,132.2 899.0,131.2 901.0,131.2 901.0,133.2 902.0,131.2 903.0,131.2 903.0,132.2 904.0,131.2 907.0,131.2 907.0,132.2 908.0,131.2 909.0,131.2 909.0,133.2 910.0,131.2 911.0,131.2 911.0,132.2 912.0,131.2 914.0,131.2 914.0,132.2 915.0,131.2 914.0,131.2" fill="none" stroke="#00ff00" stroke-width="1.8"/><polyline points="870.5,131.5 870.5,136.0" fill="none" stroke="#00ff00" stroke-width="1.4" stroke-linejoin="round"/><polyline points="451.0,214.0 803.5,214.0" fill="none" stroke="#fff" stroke-width="2" stroke-linejoin="round"/><polyline points="803.5,213.5 804.0,190.0 805.0,150.0 806.5,147.5 869.6,116.5 870.3,121.8 854.4,131.5 854.4,125.5" fill="none" stroke="#fff" stroke-width="1.1" stroke-linejoin="round"/><polyline points="804.5,213.5 805.2,190.0 806.0,158.0 807.5,151.5 854.4,127.0 854.4,132.4 912.7,92.3" fill="none" stroke="#fff" stroke-width="1.4" stroke-linejoin="round"/><polyline points="875.0,117.5 913.5,91.5" fill="none" stroke="#fff" stroke-width="2" stroke-linejoin="round"/><polyline points="461.0,429.5 462.0,429.5 462.0,430.5 463.0,429.5 466.0,429.5 466.0,430.5 467.0,429.5 469.0,429.5 469.0,430.5 470.0,429.5 476.0,429.5 476.0,430.5 477.0,429.5 478.0,429.5 478.0,430.5 479.0,429.5 488.0,429.5 488.0,430.5 489.0,429.5 510.0,429.5 510.0,431.5 511.0,429.5 513.0,429.5 513.0,430.5 514.0,429.5 554.0,429.5 554.0,430.5 555.0,429.5 559.0,429.5 559.0,430.5 560.0,429.5 583.0,429.5 583.0,430.5 584.0,429.5 587.0,429.5 587.0,431.5 588.0,429.5 606.0,429.5 606.0,430.5 607.0,429.5 623.0,429.5 623.0,431.5 624.0,429.5 626.0,429.5 626.0,430.5 627.0,429.5 631.0,429.5 631.0,431.5 632.0,429.5 639.0,429.5 639.0,431.5 640.0,429.5 673.0,429.5 673.0,430.5 674.0,429.5 675.0,429.5 675.0,431.5 676.0,429.5 680.0,429.5 680.0,430.5 681.0,429.5 691.0,429.5 691.0,430.5 692.0,429.5 710.0,429.5 710.0,431.5 711.0,429.5 729.0,429.5 729.0,431.5 730.0,429.5 737.0,429.5 737.0,430.5 738.0,429.5 741.0,429.5 741.0,431.5 742.0,429.5 776.0,429.5 776.0,431.5 777.0,429.5 783.0,429.5 783.0,430.5 784.0,429.5 789.0,429.5 789.0,430.5 790.0,429.5 803.0,429.5 803.0,431.5 804.0,429.5 806.0,429.5 806.0,430.5 807.0,429.5 809.0,429.5 809.0,430.5 810.0,429.5 826.0,429.5 826.0,430.5 827.0,429.5 829.0,429.5 829.0,430.5 830.0,429.5 836.0,429.5 836.0,431.5 837.0,429.5 841.0,429.5 841.0,430.5 842.0,429.5 841.0,429.5" fill="none" stroke="#00ff00" stroke-width="1"/><polyline points="461.0,348.0 859.3,348.0" fill="none" stroke="#ff4a4a" stroke-width="2" stroke-linejoin="round"/><polyline points="840.3,348.0 840.3,376.5" fill="none" stroke="#ff4a4a" stroke-width="1" stroke-linejoin="round"/><polyline points="841.2,348.0 841.2,429.5 859.5,429.5 859.5,348.0" fill="none" stroke="#ff4a4a" stroke-width="1.1" stroke-linejoin="round"/><polyline points="841.0,429.5 846.0,429.5 846.0,427.5 847.0,429.5 852.0,429.5 852.0,428.5 853.0,429.5 855.0,429.5 855.0,428.5 856.0,429.5 866.0,429.5 866.0,427.5 867.0,429.5 870.0,429.5 870.0,427.5 871.0,429.5 875.0,429.5 875.0,428.5 876.0,429.5 888.0,429.5 888.0,428.5 889.0,429.5 891.0,429.5 891.0,427.5 892.0,429.5 895.0,429.5 895.0,428.5 896.0,429.5 908.0,429.5" fill="none" stroke="#ff4a4a" stroke-width="1"/><polyline points="842.5,389.0 842.5,347.6" fill="none" stroke="#00ff00" stroke-width="1.1" stroke-linejoin="round"/><polyline points="842.0,347.6 843.0,347.6 843.0,348.6 844.0,347.6 846.0,347.6 846.0,349.6 847.0,347.6 849.0,347.6 849.0,349.6 850.0,347.6 851.0,347.6 851.0,349.6 852.0,347.6 853.0,347.6 853.0,348.6 854.0,347.6 857.0,347.6 857.0,348.6 858.0,347.6 863.0,347.6 863.0,348.6 864.0,347.6 866.0,347.6 866.0,349.6 867.0,347.6 870.0,347.6 870.0,349.6 871.0,347.6 881.0,347.6 881.0,349.6 882.0,347.6 883.0,347.6 883.0,348.6 884.0,347.6 885.0,347.6 885.0,348.6 886.0,347.6 891.0,347.6 891.0,349.6 892.0,347.6 899.0,347.6 899.0,349.6 900.0,347.6 906.0,347.6 906.0,348.6 907.0,347.6 908.0,347.6" fill="none" stroke="#00ff00" stroke-width="1.8"/><polyline points="858.5,348.0 858.5,365.0" fill="none" stroke="#00ff00" stroke-width="1.1" stroke-linejoin="round"/><polyline points="461.0,430.0 783.0,430.0" fill="none" stroke="#fff" stroke-width="2" stroke-linejoin="round"/><polyline points="783.0,429.5 783.6,415.0 784.8,385.0 785.6,371.0 786.3,363.6 858.6,332.0 859.7,337.7 840.6,346.2 840.6,340.5" fill="none" stroke="#fff" stroke-width="1.1" stroke-linejoin="round"/><polyline points="784.2,429.5 784.8,410.0 786.0,380.0 786.5,371.0 790.5,369.5 794.0,366.0 798.0,361.0 840.6,341.5 859.7,337.5" fill="none" stroke="#fff" stroke-width="1.5" stroke-linejoin="round"/><polyline points="859.7,337.5 906.5,308.4" fill="none" stroke="#fff" stroke-width="2" stroke-linejoin="round"/><circle cx="906.5" cy="308.3" r="1.8" fill="none" stroke="#fff" stroke-width="1"/><polyline points="438.0,645.5 443.0,645.5 443.0,646.5 444.0,645.5 450.0,645.5 450.0,646.5 451.0,645.5 453.0,645.5 453.0,646.5 454.0,645.5 457.0,645.5 457.0,646.5 458.0,645.5 472.0,645.5 472.0,646.5 473.0,645.5 475.0,645.5 475.0,646.5 476.0,645.5 478.0,645.5 478.0,646.5 479.0,645.5 494.0,645.5 494.0,647.5 495.0,645.5 497.0,645.5 497.0,647.5 498.0,645.5 502.0,645.5 502.0,646.5 503.0,645.5 513.0,645.5 513.0,646.5 514.0,645.5 519.0,645.5 519.0,646.5 520.0,645.5 538.0,645.5 538.0,646.5 539.0,645.5 557.0,645.5 557.0,646.5 558.0,645.5 565.0,645.5 565.0,647.5 566.0,645.5 567.0,645.5 567.0,646.5 568.0,645.5 573.0,645.5 573.0,646.5 574.0,645.5 576.0,645.5 576.0,646.5 577.0,645.5 579.0,645.5 579.0,646.5 580.0,645.5 585.0,645.5 585.0,646.5 586.0,645.5 600.0,645.5 600.0,646.5 601.0,645.5 605.0,645.5 605.0,646.5 606.0,645.5 610.0,645.5 610.0,647.5 611.0,645.5 612.0,645.5 612.0,646.5 613.0,645.5 617.0,645.5 617.0,646.5 618.0,645.5 624.0,645.5 624.0,646.5 625.0,645.5 629.0,645.5 629.0,646.5 630.0,645.5 633.0,645.5 633.0,646.5 634.0,645.5 636.0,645.5 636.0,646.5 637.0,645.5 638.0,645.5 638.0,646.5 639.0,645.5 640.0,645.5 640.0,647.5 641.0,645.5 653.0,645.5 653.0,647.5 654.0,645.5 665.0,645.5 665.0,646.5 666.0,645.5 687.0,645.5 687.0,647.5 688.0,645.5 704.0,645.5 704.0,646.5 705.0,645.5 719.0,645.5 719.0,646.5 720.0,645.5 724.0,645.5 724.0,646.5 725.0,645.5 739.0,645.5 739.0,647.5 740.0,645.5 741.0,645.5 741.0,646.5 742.0,645.5 752.0,645.5 752.0,647.5 753.0,645.5 765.0,645.5 765.0,646.5 766.0,645.5 774.0,645.5 774.0,646.5 775.0,645.5 779.0,645.5 779.0,647.5 780.0,645.5 785.0,645.5 785.0,646.5 786.0,645.5 792.0,645.5 792.0,646.5 793.0,645.5 804.0,645.5 804.0,647.5 805.0,645.5 808.0,645.5 808.0,646.5 809.0,645.5 821.0,645.5 821.0,646.5 822.0,645.5 839.0,645.5" fill="none" stroke="#00ff00" stroke-width="1"/><polyline points="438.0,563.5 454.0,563.5 454.0,565.5 455.0,563.5 457.0,563.5 457.0,565.5 458.0,563.5 468.0,563.5 468.0,564.5 469.0,563.5 475.0,563.5 475.0,565.5 476.0,563.5 479.0,563.5 479.0,564.5 480.0,563.5 481.0,563.5 481.0,565.5 482.0,563.5 487.0,563.5 487.0,564.5 488.0,563.5 494.0,563.5 494.0,564.5 495.0,563.5 496.0,563.5 496.0,564.5 497.0,563.5 501.0,563.5 501.0,564.5 502.0,563.5 513.0,563.5 513.0,564.5 514.0,563.5 517.0,563.5 517.0,564.5 518.0,563.5 519.0,563.5 519.0,564.5 520.0,563.5 521.0,563.5 521.0,565.5 522.0,563.5 530.0,563.5 530.0,565.5 531.0,563.5 532.0,563.5 532.0,565.5 533.0,563.5 538.0,563.5 538.0,564.5 539.0,563.5 540.0,563.5 540.0,564.5 541.0,563.5 543.0,563.5 543.0,564.5 544.0,563.5 555.0,563.5 555.0,565.5 556.0,563.5 557.0,563.5 557.0,564.5 558.0,563.5 561.0,563.5 561.0,564.5 562.0,563.5 569.0,563.5 569.0,564.5 570.0,563.5 578.0,563.5 578.0,565.5 579.0,563.5 583.0,563.5 583.0,564.5 584.0,563.5 585.0,563.5 585.0,564.5 586.0,563.5 587.0,563.5 587.0,564.5 588.0,563.5 591.0,563.5 591.0,564.5 592.0,563.5 594.0,563.5 594.0,564.5 595.0,563.5 604.0,563.5 604.0,564.5 605.0,563.5 607.0,563.5 607.0,564.5 608.0,563.5 610.0,563.5 610.0,564.5 611.0,563.5 612.0,563.5 612.0,564.5 613.0,563.5 617.0,563.5 617.0,564.5 618.0,563.5 622.0,563.5 622.0,565.5 623.0,563.5 626.0,563.5 626.0,565.5 627.0,563.5 632.0,563.5 632.0,565.5 633.0,563.5 652.0,563.5 652.0,565.5 653.0,563.5 669.0,563.5 669.0,565.5 670.0,563.5 673.0,563.5 673.0,564.5 674.0,563.5 678.0,563.5 678.0,564.5 679.0,563.5 689.0,563.5 689.0,565.5 690.0,563.5 694.0,563.5 694.0,564.5 695.0,563.5 697.0,563.5 697.0,564.5 698.0,563.5 704.0,563.5 704.0,564.5 705.0,563.5 713.0,563.5 713.0,565.5 714.0,563.5 730.0,563.5 730.0,564.5 731.0,563.5 733.0,563.5 733.0,564.5 734.0,563.5 737.0,563.5 737.0,565.5 738.0,563.5 741.0,563.5 741.0,564.5 742.0,563.5 745.0,563.5 745.0,564.5 746.0,563.5 750.0,563.5 750.0,564.5 751.0,563.5 753.0,563.5 753.0,565.5 754.0,563.5 764.0,563.5 764.0,564.5 765.0,563.5 766.0,563.5 766.0,564.5 767.0,563.5 770.0,563.5 770.0,564.5 771.0,563.5 774.0,563.5 774.0,564.5 775.0,563.5 776.0,563.5 776.0,564.5 777.0,563.5 782.0,563.5 782.0,564.5 783.0,563.5 791.0,563.5 791.0,565.5 792.0,563.5 804.0,563.5 804.0,565.5 805.0,563.5 806.0,563.5 806.0,564.5 807.0,563.5 809.0,563.5 809.0,564.5 810.0,563.5 818.0,563.5 818.0,564.5 819.0,563.5 830.0,563.5 830.0,564.5 831.0,563.5 835.0,563.5 835.0,564.5 836.0,563.5 837.0,563.5 837.0,565.5 838.0,563.5 843.0,563.5 843.0,564.5 844.0,563.5 858.0,563.5 858.0,565.5 859.0,563.5 858.0,563.5" fill="none" stroke="#ff4a4a" stroke-width="1.6"/><polyline points="839.8,563.5 839.8,646.5 839.8,645.5 858.4,645.5 858.4,563.5" fill="none" stroke="#ff4a4a" stroke-width="1.1" stroke-linejoin="round"/><polyline points="839.0,645.5 841.0,645.5 841.0,646.5 842.0,645.5 851.0,645.5 851.0,646.5 852.0,645.5 853.0,645.5 853.0,647.5 854.0,645.5 857.0,645.5 857.0,647.5 858.0,645.5 863.0,645.5 863.0,646.5 864.0,645.5 865.0,645.5 865.0,647.5 866.0,645.5 870.0,645.5 870.0,646.5 871.0,645.5 872.0,645.5 872.0,647.5 873.0,645.5 874.0,645.5 874.0,646.5 875.0,645.5 878.0,645.5 878.0,646.5 879.0,645.5 897.0,645.5 897.0,646.5 898.0,645.5 904.0,645.5 904.0,646.5 905.0,645.5 909.0,645.5 909.0,647.5 910.0,645.5 910.0,645.5" fill="none" stroke="#ff4a4a" stroke-width="1.3"/><polyline points="838.8,605.0 838.8,563.0" fill="none" stroke="#00ff00" stroke-width="1.1" stroke-linejoin="round"/><polyline points="839.0,562.7 846.0,562.7 846.0,561.7 847.0,562.7 857.0,562.7 857.0,561.7 858.0,562.7 859.0,562.7 859.0,561.7 860.0,562.7 872.0,562.7 872.0,560.7 873.0,562.7 886.0,562.7 886.0,560.7 887.0,562.7 891.0,562.7 891.0,560.7 892.0,562.7 895.0,562.7 895.0,561.7 896.0,562.7 910.0,562.7" fill="none" stroke="#00ff00" stroke-width="1.8"/><polyline points="438.0,646.0 776.0,646.0" fill="none" stroke="#fff" stroke-width="2" stroke-linejoin="round"/><polyline points="775.5,645.5 776.5,630.0 777.3,600.0 778.0,584.0 779.5,579.0 858.2,548.0 858.6,553.5 838.9,562.4 838.9,556.5" fill="none" stroke="#fff" stroke-width="1.1" stroke-linejoin="round"/><polyline points="776.8,645.5 777.5,625.0 778.5,590.0 780.0,581.5 838.9,557.5 858.6,551.0" fill="none" stroke="#fff" stroke-width="1.5" stroke-linejoin="round"/><polyline points="858.6,551.0 908.5,524.8" fill="none" stroke="#fff" stroke-width="2" stroke-linejoin="round"/><path d="M904 522.5 l5 4 m0 -4 l-5 4" stroke="#fff" stroke-width="1" fill="none"/></svg>
<div class="panel" style="left:965px;top:63px;width:122px;height:74px;overflow:hidden"><div style="left:0;top:0;width:13px;height:74px;background:linear-gradient(to right,#bcbcbc 0,#d0d0d0 2px,#d3d3d3 10px,#c6c6c6 13px)"></div><div style="left:109px;top:0;width:13px;height:74px;background:linear-gradient(to right,#c0c0c0 0,#a8a8a8 40%,#868686 92%,#4a4a4a 100%)"></div><div style="left:1px;top:0;width:120px;height:2px;background:linear-gradient(to right,#dcdcdc 0,#d6d6d6 98px,#a0a0a0 100%)"></div><div style="left:0;top:72px;width:122px;height:2px;background:linear-gradient(to bottom,#9a9a9a,#7e7e7e)"></div></div>
<div class="t" style="left:981px;top:67.5px;font-size:12px;line-height:16px;">压力</div>
<div style="left:1045px;top:66px;width:27px;height:19px;background:#000;border-right:1px solid #e4e4e4;border-bottom:1px solid #e4e4e4"></div>
<svg style="left:0;top:0" width="1440" height="825"><polyline points="1047,81 1056,69 1067,81 1070,76" fill="none" stroke="#ffffff" stroke-width="1"/></svg>
<div class="t" style="left:981px;top:92.5px;font-size:12px;line-height:16px;">NC电压</div>
<div style="left:1045px;top:91px;width:27px;height:19px;background:#000;border-right:1px solid #e4e4e4;border-bottom:1px solid #e4e4e4"></div>
<svg style="left:0;top:0" width="1440" height="825"><polyline points="1047,106 1055,94 1063,106 1070,94" fill="none" stroke="#ff4a4a" stroke-width="1"/></svg>
<div class="t" style="left:981px;top:117.5px;font-size:12px;line-height:16px;">NO电压</div>
<div style="left:1045px;top:116px;width:27px;height:19px;background:#000;border-right:1px solid #e4e4e4;border-bottom:1px solid #e4e4e4"></div>
<svg style="left:0;top:0" width="1440" height="825"><polyline points="1047,131 1055,119 1063,131 1070,119" fill="none" stroke="#00ff00" stroke-width="1"/></svg>
<div class="panel" style="left:966px;top:279px;width:122px;height:74px;overflow:hidden"><div style="left:0;top:0;width:13px;height:74px;background:linear-gradient(to right,#bcbcbc 0,#d0d0d0 2px,#d3d3d3 10px,#c6c6c6 13px)"></div><div style="left:109px;top:0;width:13px;height:74px;background:linear-gradient(to right,#c0c0c0 0,#a8a8a8 40%,#868686 92%,#4a4a4a 100%)"></div><div style="left:1px;top:0;width:120px;height:2px;background:linear-gradient(to right,#dcdcdc 0,#d6d6d6 98px,#a0a0a0 100%)"></div><div style="left:0;top:72px;width:122px;height:2px;background:linear-gradient(to bottom,#9a9a9a,#7e7e7e)"></div></div>
<div class="t" style="left:982px;top:283.5px;font-size:12px;line-height:16px;">压力</div>
<div style="left:1046px;top:282px;width:27px;height:19px;background:#000;border-right:1px solid #e4e4e4;border-bottom:1px solid #e4e4e4"></div>
<svg style="left:0;top:0" width="1440" height="825"><polyline points="1048,297 1057,285 1068,297 1071,292" fill="none" stroke="#ffffff" stroke-width="1"/></svg>
<div class="t" style="left:982px;top:308.5px;font-size:12px;line-height:16px;">NC电压</div>
<div style="left:1046px;top:307px;width:27px;height:19px;background:#000;border-right:1px solid #e4e4e4;border-bottom:1px solid #e4e4e4"></div>
<svg style="left:0;top:0" width="1440" height="825"><polyline points="1048,322 1056,310 1064,322 1071,310" fill="none" stroke="#ff4a4a" stroke-width="1"/></svg>
<div class="t" style="left:982px;top:333.5px;font-size:12px;line-height:16px;">NO电压</div>
<div style="left:1046px;top:332px;width:27px;height:19px;background:#000;border-right:1px solid #e4e4e4;border-bottom:1px solid #e4e4e4"></div>
<svg style="left:0;top:0" width="1440" height="825"><polyline points="1048,347 1056,335 1064,347 1071,335" fill="none" stroke="#00ff00" stroke-width="1"/></svg>
<div class="panel" style="left:966px;top:495px;width:122px;height:74px;overflow:hidden"><div style="left:0;top:0;width:13px;height:74px;background:linear-gradient(to right,#bcbcbc 0,#d0d0d0 2px,#d3d3d3 10px,#c6c6c6 13px)"></div><div style="left:109px;top:0;width:13px;height:74px;background:linear-gradient(to right,#c0c0c0 0,#a8a8a8 40%,#868686 92%,#4a4a4a 100%)"></div><div style="left:1px;top:0;width:120px;height:2px;background:linear-gradient(to right,#dcdcdc 0,#d6d6d6 98px,#a0a0a0 100%)"></div><div style="left:0;top:72px;width:122px;height:2px;background:linear-gradient(to bottom,#9a9a9a,#7e7e7e)"></div></div>
<div class="t" style="left:982px;top:499.5px;font-size:12px;line-height:16px;">压力</div>
<div style="left:1046px;top:498px;width:27px;height:19px;background:#000;border-right:1px solid #e4e4e4;border-bottom:1px solid #e4e4e4"></div>
<svg style="left:0;top:0" width="1440" height="825"><polyline points="1048,513 1057,501 1068,513 1071,508" fill="none" stroke="#ffffff" stroke-width="1"/></svg>
<div class="t" style="left:982px;top:524.5px;font-size:12px;line-height:16px;">NC电压</div>
<div style="left:1046px;top:523px;width:27px;height:19px;background:#000;border-right:1px solid #e4e4e4;border-bottom:1px solid #e4e4e4"></div>
<svg style="left:0;top:0" width="1440" height="825"><polyline points="1048,538 1056,526 1064,538 1071,526" fill="none" stroke="#ff4a4a" stroke-width="1"/></svg>
<div class="t" style="left:982px;top:549.5px;font-size:12px;line-height:16px;">NO电压</div>
<div style="left:1046px;top:548px;width:27px;height:19px;background:#000;border-right:1px solid #e4e4e4;border-bottom:1px solid #e4e4e4"></div>
<svg style="left:0;top:0" width="1440" height="825"><polyline points="1048,563 1056,551 1064,563 1071,551" fill="none" stroke="#00ff00" stroke-width="1"/></svg>
<div class="panel" style="left:967px;top:137px;width:89px;height:25px;overflow:hidden"><div style="left:0;top:0;width:10px;height:25px;background:linear-gradient(to right,#bcbcbc 0,#d0d0d0 2px,#d3d3d3 7px,#c6c6c6 10px)"></div><div style="left:79px;top:0;width:10px;height:25px;background:linear-gradient(to right,#c0c0c0 0,#a8a8a8 40%,#868686 92%,#4a4a4a 100%)"></div><div style="left:1px;top:0;width:87px;height:1px;background:#d8d8d8"></div><div style="left:0;top:23px;width:89px;height:2px;background:linear-gradient(to bottom,#a2a2a2,#858585)"></div></div>
<div style="left:981px;top:142px;width:19px;height:16px;background:linear-gradient(135deg,#d8d8d8,#c4c4c4 60%,#b6b6b6);border:1px solid #dedede;border-right-color:#7e7e7e;border-bottom-color:#7e7e7e"></div>
<div style="left:1002px;top:142px;width:19px;height:16px;background:linear-gradient(to bottom,#6c6c6c,#8e8e8e);border:1px solid #5e5e5e;border-right-color:#b0b0b0;border-bottom-color:#b8b8b8"></div>
<div style="left:1023px;top:142px;width:19px;height:16px;background:linear-gradient(135deg,#d8d8d8,#c4c4c4 60%,#b6b6b6);border:1px solid #dedede;border-right-color:#7e7e7e;border-bottom-color:#7e7e7e"></div>
<svg style="left:981px;top:142px" width="64" height="16"><rect x="2" y="3" width="3" height="3" fill="#2e6e1e"/><path d="M3.500 8.500H16M9.500 2V15" stroke="#000" stroke-width="1.100" fill="none"/><circle cx="9.500" cy="8.500" r="1.300" fill="#fff" stroke="#000" stroke-width=".9"/><rect x="22.500" y="2.500" width="3.500" height="3.500" rx="1" fill="#40ff40"/><path d="M28.500 11 L24.500 15" stroke="#000" stroke-width="2.600"/><path d="M28.300 11.200 L25 14.500" stroke="#d8d8d8" stroke-width="1" stroke-dasharray="1 1"/><circle cx="32.500" cy="6.700" r="4" fill="#dcdcff" stroke="#000" stroke-width="1.100"/><path d="M30 6.700H35M32.500 4.200V9.200" stroke="#000" stroke-width="1.300" fill="none"/><path d="M32 12.500h5l-2.500 2.500z" fill="#000"/><rect x="44" y="3" width="3" height="3" fill="#2e6e1e"/><path d="M45.500 8.500 h1 l2 2 M45.500 9.500 l4 5 M49.500 10 V3.500 M49.500 3.500 q1 -1.500 2 0 V9 M51.500 3 q1 -1.500 2 0 V9 M53.500 3.500 q1 -1.200 2 .3 V9 M55.500 5.500 q1.300 -.5 1.500 1 V11.500 l-2 3" fill="none" stroke="#000" stroke-width="1" stroke-linejoin="round"/></svg>
<div class="panel" style="left:968px;top:353px;width:89px;height:25px;overflow:hidden"><div style="left:0;top:0;width:10px;height:25px;background:linear-gradient(to right,#bcbcbc 0,#d0d0d0 2px,#d3d3d3 7px,#c6c6c6 10px)"></div><div style="left:79px;top:0;width:10px;height:25px;background:linear-gradient(to right,#c0c0c0 0,#a8a8a8 40%,#868686 92%,#4a4a4a 100%)"></div><div style="left:1px;top:0;width:87px;height:1px;background:#d8d8d8"></div><div style="left:0;top:23px;width:89px;height:2px;background:linear-gradient(to bottom,#a2a2a2,#858585)"></div></div>
<div style="left:982px;top:358px;width:19px;height:16px;background:linear-gradient(135deg,#d8d8d8,#c4c4c4 60%,#b6b6b6);border:1px solid #dedede;border-right-color:#7e7e7e;border-bottom-color:#7e7e7e"></div>
<div style="left:1003px;top:358px;width:19px;height:16px;background:linear-gradient(to bottom,#6c6c6c,#8e8e8e);border:1px solid #5e5e5e;border-right-color:#b0b0b0;border-bottom-color:#b8b8b8"></div>
<div style="left:1024px;top:358px;width:19px;height:16px;background:linear-gradient(135deg,#d8d8d8,#c4c4c4 60%,#b6b6b6);border:1px solid #dedede;border-right-color:#7e7e7e;border-bottom-color:#7e7e7e"></div>
<svg style="left:982px;top:358px" width="64" height="16"><rect x="2" y="3" width="3" height="3" fill="#2e6e1e"/><path d="M3.500 8.500H16M9.500 2V15" stroke="#000" stroke-width="1.100" fill="none"/><circle cx="9.500" cy="8.500" r="1.300" fill="#fff" stroke="#000" stroke-width=".9"/><rect x="22.500" y="2.500" width="3.500" height="3.500" rx="1" fill="#40ff40"/><path d="M28.500 11 L24.500 15" stroke="#000" stroke-width="2.600"/><path d="M28.300 11.200 L25 14.500" stroke="#d8d8d8" stroke-width="1" stroke-dasharray="1 1"/><circle cx="32.500" cy="6.700" r="4" fill="#dcdcff" stroke="#000" stroke-width="1.100"/><path d="M30 6.700H35M32.500 4.200V9.200" stroke="#000" stroke-width="1.300" fill="none"/><path d="M32 12.500h5l-2.500 2.500z" fill="#000"/><rect x="44" y="3" width="3" height="3" fill="#2e6e1e"/><path d="M45.500 8.500 h1 l2 2 M45.500 9.500 l4 5 M49.500 10 V3.500 M49.500 3.500 q1 -1.500 2 0 V9 M51.500 3 q1 -1.500 2 0 V9 M53.500 3.500 q1 -1.200 2 .3 V9 M55.500 5.500 q1.300 -.5 1.500 1 V11.500 l-2 3" fill="none" stroke="#000" stroke-width="1" stroke-linejoin="round"/></svg>
<div class="panel" style="left:966px;top:569px;width:88px;height:25px;overflow:hidden"><div style="left:0;top:0;width:10px;height:25px;background:linear-gradient(to right,#bcbcbc 0,#d0d0d0 2px,#d3d3d3 7px,#c6c6c6 10px)"></div><div style="left:78px;top:0;width:10px;height:25px;background:linear-gradient(to right,#c0c0c0 0,#a8a8a8 40%,#868686 92%,#4a4a4a 100%)"></div><div style="left:1px;top:0;width:86px;height:1px;background:#d8d8d8"></div><div style="left:0;top:23px;width:88px;height:2px;background:linear-gradient(to bottom,#a2a2a2,#858585)"></div></div>
<div style="left:979px;top:574px;width:19px;height:16px;background:linear-gradient(135deg,#d8d8d8,#c4c4c4 60%,#b6b6b6);border:1px solid #dedede;border-right-color:#7e7e7e;border-bottom-color:#7e7e7e"></div>
<div style="left:1000px;top:574px;width:19px;height:16px;background:linear-gradient(to bottom,#6c6c6c,#8e8e8e);border:1px solid #5e5e5e;border-right-color:#b0b0b0;border-bottom-color:#b8b8b8"></div>
<div style="left:1021px;top:574px;width:19px;height:16px;background:linear-gradient(135deg,#d8d8d8,#c4c4c4 60%,#b6b6b6);border:1px solid #dedede;border-right-color:#7e7e7e;border-bottom-color:#7e7e7e"></div>
<svg style="left:979px;top:574px" width="64" height="16"><rect x="2" y="3" width="3" height="3" fill="#2e6e1e"/><path d="M3.500 8.500H16M9.500 2V15" stroke="#000" stroke-width="1.100" fill="none"/><circle cx="9.500" cy="8.500" r="1.300" fill="#fff" stroke="#000" stroke-width=".9"/><rect x="22.500" y="2.500" width="3.500" height="3.500" rx="1" fill="#40ff40"/><path d="M28.500 11 L24.500 15" stroke="#000" stroke-width="2.600"/><path d="M28.300 11.200 L25 14.500" stroke="#d8d8d8" stroke-width="1" stroke-dasharray="1 1"/><circle cx="32.500" cy="6.700" r="4" fill="#dcdcff" stroke="#000" stroke-width="1.100"/><path d="M30 6.700H35M32.500 4.200V9.200" stroke="#000" stroke-width="1.300" fill="none"/><path d="M32 12.500h5l-2.500 2.500z" fill="#000"/><rect x="44" y="3" width="3" height="3" fill="#2e6e1e"/><path d="M45.500 8.500 h1 l2 2 M45.500 9.500 l4 5 M49.500 10 V3.500 M49.500 3.500 q1 -1.500 2 0 V9 M51.500 3 q1 -1.500 2 0 V9 M53.500 3.500 q1 -1.200 2 .3 V9 M55.500 5.500 q1.300 -.5 1.500 1 V11.500 l-2 3" fill="none" stroke="#000" stroke-width="1" stroke-linejoin="round"/></svg>
<div style="left:983px;top:186px;width:102px;height:90px;border:3px solid;border-color:#8a94b5 #bec6e0 #bec6e0 #8a94b5"></div>
<div style="left:986px;top:189px;width:96px;height:84px;overflow:hidden;background:radial-gradient(ellipse 18px 13px at 18px 19px,rgba(255,255,255,.62) 0,rgba(255,255,255,.3) 55%,rgba(255,255,255,0) 100%),linear-gradient(to bottom,rgba(0,70,0,0) 72%,rgba(0,70,0,.16) 88%,rgba(0,70,0,.32) 100%),linear-gradient(to right,rgba(0,70,0,0) 82%,rgba(0,70,0,.12) 92%,rgba(0,70,0,.26) 100%),radial-gradient(ellipse 115px 101px at 19px 17px,#66ff22 0,#58fa12 40%,#4fea0e 68%,#3cc408 88%,#2a9e02 100%)"></div>
<div class="tc" style="left:986px;top:208px;width:96px;height:48px;line-height:48px;font-size:42px;letter-spacing:-1.5px;text-indent:-2px">OK</div>
<div style="left:983px;top:404px;width:102px;height:90px;border:3px solid;border-color:#8a94b5 #bec6e0 #bec6e0 #8a94b5"></div>
<div style="left:986px;top:407px;width:96px;height:84px;overflow:hidden;background:radial-gradient(ellipse 18px 13px at 18px 19px,rgba(255,255,255,.62) 0,rgba(255,255,255,.3) 55%,rgba(255,255,255,0) 100%),linear-gradient(to bottom,rgba(0,70,0,0) 72%,rgba(0,70,0,.16) 88%,rgba(0,70,0,.32) 100%),linear-gradient(to right,rgba(0,70,0,0) 82%,rgba(0,70,0,.12) 92%,rgba(0,70,0,.26) 100%),radial-gradient(ellipse 115px 101px at 19px 17px,#66ff22 0,#58fa12 40%,#4fea0e 68%,#3cc408 88%,#2a9e02 100%)"></div>
<div class="tc" style="left:986px;top:426px;width:96px;height:48px;line-height:48px;font-size:42px;letter-spacing:-1.5px;text-indent:-2px">OK</div>
<div style="left:982px;top:618px;width:102px;height:90px;border:3px solid;border-color:#8a94b5 #bec6e0 #bec6e0 #8a94b5"></div>
<div style="left:985px;top:621px;width:96px;height:84px;overflow:hidden;background:radial-gradient(ellipse 18px 13px at 18px 19px,rgba(255,255,255,.62) 0,rgba(255,255,255,.3) 55%,rgba(255,255,255,0) 100%),linear-gradient(to bottom,rgba(0,70,0,0) 72%,rgba(0,70,0,.16) 88%,rgba(0,70,0,.32) 100%),linear-gradient(to right,rgba(0,70,0,0) 82%,rgba(0,70,0,.12) 92%,rgba(0,70,0,.26) 100%),radial-gradient(ellipse 115px 101px at 19px 17px,#66ff22 0,#58fa12 40%,#4fea0e 68%,#3cc408 88%,#2a9e02 100%)"></div>
<div class="tc" style="left:985px;top:640px;width:96px;height:48px;line-height:48px;font-size:42px;letter-spacing:-1.5px;text-indent:-2px">OK</div>
<div style="left:1093px;top:65px;width:176px;height:208px;border:4px solid;border-color:#8f99b8 #c3cbe1 #c3cbe1 #8f99b8"></div>
<div style="left:1096px;top:68px;width:170px;height:202px;border:1px solid;border-color:#7c86a6 #d0d6e8 #d0d6e8 #7c86a6"></div>
<div style="left:1097px;top:69px;width:168px;height:200px;background:#8a8a8a"></div>
<div class="hdr" style="left:1097px;top:69px;width:67px;height:19px">测试项</div>
<div class="hdr" style="left:1164px;top:69px;width:51px;height:19px">测试值</div>
<div class="hdr" style="left:1215px;top:69px;width:50px;height:19px">结果</div>
<div class="cell" style="left:1097px;top:89px;width:66px;height:19px;background:#66ff00">OP</div>
<div class="cell" style="left:1164px;top:89px;width:50px;height:19px;background:#66ff00">14.690</div>
<div class="cell" style="left:1215px;top:89px;width:50px;height:19px;background:#66ff00">OK</div>
<div class="cell" style="left:1097px;top:109px;width:66px;height:19px;background:#66ff00">RLP</div>
<div class="cell" style="left:1164px;top:109px;width:50px;height:19px;background:#66ff00">14.942</div>
<div class="cell" style="left:1215px;top:109px;width:50px;height:19px;background:#66ff00">OK</div>
<div class="cell" style="left:1097px;top:129px;width:66px;height:19px;background:#66ff00">DT</div>
<div class="cell" style="left:1164px;top:129px;width:50px;height:19px;background:#66ff00">0.252</div>
<div class="cell" style="left:1215px;top:129px;width:50px;height:19px;background:#66ff00">OK</div>
<div class="cell" style="left:1097px;top:149px;width:66px;height:19px;background:#66ff00">TTP</div>
<div class="cell" style="left:1164px;top:149px;width:50px;height:19px;background:#66ff00">13.951</div>
<div class="cell" style="left:1215px;top:149px;width:50px;height:19px;background:#66ff00">OK</div>
<div class="cell" style="left:1097px;top:169px;width:66px;height:19px;background:#66ff00">OF</div>
<div class="cell" style="left:1164px;top:169px;width:50px;height:19px;background:#66ff00">239.16</div>
<div class="cell" style="left:1215px;top:169px;width:50px;height:19px;background:#66ff00">OK</div>
<div class="cell" style="left:1097px;top:189px;width:66px;height:19px;background:#66ff00">RF</div>
<div class="cell" style="left:1164px;top:189px;width:50px;height:19px;background:#66ff00">202.04</div>
<div class="cell" style="left:1215px;top:189px;width:50px;height:19px;background:#66ff00">OK</div>
<div class="cell" style="left:1097px;top:209px;width:66px;height:19px;background:#66ff00">NC-NO</div>
<div class="cell" style="left:1164px;top:209px;width:50px;height:19px;background:#66ff00">5.98</div>
<div class="cell" style="left:1215px;top:209px;width:50px;height:19px;background:#66ff00">OK</div>
<div class="cell" style="left:1097px;top:229px;width:66px;height:19px;background:#66ff00">NO-NC</div>
<div class="cell" style="left:1164px;top:229px;width:50px;height:19px;background:#66ff00">7.81</div>
<div class="cell" style="left:1215px;top:229px;width:50px;height:19px;background:#66ff00">OK</div>
<div class="cell" style="left:1097px;top:249px;width:66px;height:19px;background:#66ff00">Flash</div>
<div class="cell" style="left:1164px;top:249px;width:50px;height:19px;background:#66ff00">0.00</div>
<div class="cell" style="left:1215px;top:249px;width:50px;height:19px;background:#66ff00">OK</div>
<div style="left:1093px;top:280px;width:176px;height:208px;border:4px solid;border-color:#8f99b8 #c3cbe1 #c3cbe1 #8f99b8"></div>
<div style="left:1096px;top:283px;width:170px;height:202px;border:1px solid;border-color:#7c86a6 #d0d6e8 #d0d6e8 #7c86a6"></div>
<div style="left:1097px;top:284px;width:168px;height:200px;background:#8a8a8a"></div>
<div class="hdr" style="left:1097px;top:284px;width:67px;height:19px">测试项</div>
<div class="hdr" style="left:1164px;top:284px;width:51px;height:19px">测试值</div>
<div class="hdr" style="left:1215px;top:284px;width:50px;height:19px">结果</div>
<div class="cell" style="left:1097px;top:304px;width:66px;height:19px;background:#66ff00">OP</div>
<div class="cell" style="left:1164px;top:304px;width:50px;height:19px;background:#66ff00">14.697</div>
<div class="cell" style="left:1215px;top:304px;width:50px;height:19px;background:#66ff00">OK</div>
<div class="cell" style="left:1097px;top:324px;width:66px;height:19px;background:#66ff00">RLP</div>
<div class="cell" style="left:1164px;top:324px;width:50px;height:19px;background:#66ff00">14.956</div>
<div class="cell" style="left:1215px;top:324px;width:50px;height:19px;background:#66ff00">OK</div>
<div class="cell" style="left:1097px;top:344px;width:66px;height:19px;background:#66ff00">DT</div>
<div class="cell" style="left:1164px;top:344px;width:50px;height:19px;background:#66ff00">0.259</div>
<div class="cell" style="left:1215px;top:344px;width:50px;height:19px;background:#66ff00">OK</div>
<div class="cell" style="left:1097px;top:364px;width:66px;height:19px;background:#66ff00">TTP</div>
<div class="cell" style="left:1164px;top:364px;width:50px;height:19px;background:#66ff00">13.981</div>
<div class="cell" style="left:1215px;top:364px;width:50px;height:19px;background:#66ff00">OK</div>
<div class="cell" style="left:1097px;top:384px;width:66px;height:19px;background:#66ff00">OF</div>
<div class="cell" style="left:1164px;top:384px;width:50px;height:19px;background:#66ff00">240.48</div>
<div class="cell" style="left:1215px;top:384px;width:50px;height:19px;background:#66ff00">OK</div>
<div class="cell" style="left:1097px;top:404px;width:66px;height:19px;background:#66ff00">RF</div>
<div class="cell" style="left:1164px;top:404px;width:50px;height:19px;background:#66ff00">205.82</div>
<div class="cell" style="left:1215px;top:404px;width:50px;height:19px;background:#66ff00">OK</div>
<div class="cell" style="left:1097px;top:424px;width:66px;height:19px;background:#66ff00">NC-NO</div>
<div class="cell" style="left:1164px;top:424px;width:50px;height:19px;background:#66ff00">3.67</div>
<div class="cell" style="left:1215px;top:424px;width:50px;height:19px;background:#66ff00">OK</div>
<div class="cell" style="left:1097px;top:444px;width:66px;height:19px;background:#66ff00">NO-NC</div>
<div class="cell" style="left:1164px;top:444px;width:50px;height:19px;background:#66ff00">4.07</div>
<div class="cell" style="left:1215px;top:444px;width:50px;height:19px;background:#66ff00">OK</div>
<div class="cell" style="left:1097px;top:464px;width:66px;height:19px;background:#66ff00">Flash</div>
<div class="cell" style="left:1164px;top:464px;width:50px;height:19px;background:#66ff00">0.00</div>
<div class="cell" style="left:1215px;top:464px;width:50px;height:19px;background:#66ff00">OK</div>
<div style="left:1093px;top:496px;width:175px;height:208px;border:4px solid;border-color:#8f99b8 #c3cbe1 #c3cbe1 #8f99b8"></div>
<div style="left:1096px;top:499px;width:169px;height:202px;border:1px solid;border-color:#7c86a6 #d0d6e8 #d0d6e8 #7c86a6"></div>
<div style="left:1097px;top:500px;width:167px;height:200px;background:#8a8a8a"></div>
<div class="hdr" style="left:1097px;top:500px;width:66px;height:19px">测试项</div>
<div class="hdr" style="left:1163px;top:500px;width:51px;height:19px">测试值</div>
<div class="hdr" style="left:1214px;top:500px;width:50px;height:19px">结果</div>
<div class="cell" style="left:1097px;top:520px;width:65px;height:19px;background:#66ff00">OP</div>
<div class="cell" style="left:1163px;top:520px;width:50px;height:19px;background:#66ff00">14.619</div>
<div class="cell" style="left:1214px;top:520px;width:50px;height:19px;background:#66ff00">OK</div>
<div class="cell" style="left:1097px;top:540px;width:65px;height:19px;background:#66ff00">RLP</div>
<div class="cell" style="left:1163px;top:540px;width:50px;height:19px;background:#66ff00">14.875</div>
<div class="cell" style="left:1214px;top:540px;width:50px;height:19px;background:#66ff00">OK</div>
<div class="cell" style="left:1097px;top:560px;width:65px;height:19px;background:#66ff00">DT</div>
<div class="cell" style="left:1163px;top:560px;width:50px;height:19px;background:#66ff00">0.256</div>
<div class="cell" style="left:1214px;top:560px;width:50px;height:19px;background:#66ff00">OK</div>
<div class="cell" style="left:1097px;top:580px;width:65px;height:19px;background:#66ff00">TTP</div>
<div class="cell" style="left:1163px;top:580px;width:50px;height:19px;background:#66ff00">13.925</div>
<div class="cell" style="left:1214px;top:580px;width:50px;height:19px;background:#66ff00">OK</div>
<div class="cell" style="left:1097px;top:600px;width:65px;height:19px;background:#66ff00">OF</div>
<div class="cell" style="left:1163px;top:600px;width:50px;height:19px;background:#66ff00">241.82</div>
<div class="cell" style="left:1214px;top:600px;width:50px;height:19px;background:#66ff00">OK</div>
<div class="cell" style="left:1097px;top:620px;width:65px;height:19px;background:#66ff00">RF</div>
<div class="cell" style="left:1163px;top:620px;width:50px;height:19px;background:#66ff00">205.29</div>
<div class="cell" style="left:1214px;top:620px;width:50px;height:19px;background:#66ff00">OK</div>
<div class="cell" style="left:1097px;top:640px;width:65px;height:19px;background:#66ff00">NC-NO</div>
<div class="cell" style="left:1163px;top:640px;width:50px;height:19px;background:#66ff00">6.15</div>
<div class="cell" style="left:1214px;top:640px;width:50px;height:19px;background:#66ff00">OK</div>
<div class="cell" style="left:1097px;top:660px;width:65px;height:19px;background:#66ff00">NO-NC</div>
<div class="cell" style="left:1163px;top:660px;width:50px;height:19px;background:#66ff00">5.99</div>
<div class="cell" style="left:1214px;top:660px;width:50px;height:19px;background:#66ff00">OK</div>
<div class="cell" style="left:1097px;top:680px;width:65px;height:19px;background:#66ff00">Flash</div>
<div class="cell" style="left:1163px;top:680px;width:50px;height:19px;background:#66ff00">0.00</div>
<div class="cell" style="left:1214px;top:680px;width:50px;height:19px;background:#66ff00">OK</div>
<div style="left:1271px;top:65px;width:154px;height:204px;border:4px solid;border-color:#8f99b8 #c3cbe1 #c3cbe1 #8f99b8"></div>
<div style="left:1274px;top:68px;width:148px;height:198px;border:1px solid;border-color:#7c86a6 #d0d6e8 #d0d6e8 #7c86a6"></div>
<div style="left:1275px;top:69px;width:146px;height:196px;background:#8a8a8a;overflow:hidden"><div class="hdr" style="left:0;top:0;width:72px;height:19px">统计项</div><div class="hdr" style="left:72px;top:0;width:57px;height:19px">结果</div><div class="cell" style="left:0;top:20px;width:71px;height:19px;background:#fff">测试总数</div><div class="cell" style="left:72px;top:20px;width:56px;height:19px;background:#fff">31</div><div class="cell" style="left:0;top:40px;width:71px;height:19px;background:#fff">良品总数</div><div class="cell" style="left:72px;top:40px;width:56px;height:19px;background:#fff">31</div><div class="cell" style="left:0;top:60px;width:71px;height:19px;background:#fff">良品率</div><div class="cell" style="left:72px;top:60px;width:56px;height:19px;background:#fff">100.00%</div><div class="cell" style="left:0;top:80px;width:71px;height:19px;background:#fff">不良品总数</div><div class="cell" style="left:72px;top:80px;width:56px;height:19px;background:#fff">0</div><div class="cell" style="left:0;top:100px;width:71px;height:19px;background:#fff">不良品率</div><div class="cell" style="left:72px;top:100px;width:56px;height:19px;background:#fff">0.00%</div><div class="cell" style="left:0;top:120px;width:71px;height:19px;background:#fff">OP不良数</div><div class="cell" style="left:72px;top:120px;width:56px;height:19px;background:#fff">0</div><div class="cell" style="left:0;top:140px;width:71px;height:19px;background:#fff">RLP不良数</div><div class="cell" style="left:72px;top:140px;width:56px;height:19px;background:#fff">0</div><div class="cell" style="left:0;top:160px;width:71px;height:19px;background:#fff">DT不良数</div><div class="cell" style="left:72px;top:160px;width:56px;height:19px;background:#fff">0</div><div class="cell" style="left:0;top:180px;width:71px;height:19px;background:#fff">TTP不良数</div><div class="cell" style="left:72px;top:180px;width:56px;height:19px;background:#fff">0</div><div style="left:128px;top:0;width:18px;height:196px;background:#b0b0b0;border-left:1px solid #7e7e7e"></div><div style="left:129px;top:0;width:17px;height:17px;background:#d2d2d2;border:1px solid;border-color:#ededed #808080 #808080 #ededed"></div><div style="left:129px;top:180px;width:17px;height:16px;background:#d2d2d2;border:1px solid;border-color:#ededed #808080 #808080 #ededed"></div><div style="left:129px;top:17px;width:17px;height:92px;background:linear-gradient(to right,#dadada 0,#c6c6c6 35%,#b0b0b0 70%,#8a8a8a 100%);border-bottom:2px solid #787878;border-top:1px solid #e8e8e8"></div><svg style="left:129px;top:0" width="17" height="196"><path d="M8.500 4.500 L11.700 11.500 H5.300Z" fill="#000"/><path d="M8.500 191.5 L11.700 184.5 H5.300Z" fill="#000"/></svg></div>
<div style="left:1271px;top:281px;width:154px;height:204px;border:4px solid;border-color:#8f99b8 #c3cbe1 #c3cbe1 #8f99b8"></div>
<div style="left:1274px;top:284px;width:148px;height:198px;border:1px solid;border-color:#7c86a6 #d0d6e8 #d0d6e8 #7c86a6"></div>
<div style="left:1275px;top:285px;width:146px;height:196px;background:#8a8a8a;overflow:hidden"><div class="hdr" style="left:0;top:0;width:72px;height:19px">统计项</div><div class="hdr" style="left:72px;top:0;width:57px;height:19px">结果</div><div class="cell" style="left:0;top:20px;width:71px;height:19px;background:#fff">测试总数</div><div class="cell" style="left:72px;top:20px;width:56px;height:19px;background:#fff">31</div><div class="cell" style="left:0;top:40px;width:71px;height:19px;background:#fff">良品总数</div><div class="cell" style="left:72px;top:40px;width:56px;height:19px;background:#fff">30</div><div class="cell" style="left:0;top:60px;width:71px;height:19px;background:#fff">良品率</div><div class="cell" style="left:72px;top:60px;width:56px;height:19px;background:#fff">96.77%</div><div class="cell" style="left:0;top:80px;width:71px;height:19px;background:#fff">不良品总数</div><div class="cell" style="left:72px;top:80px;width:56px;height:19px;background:#fff">1</div><div class="cell" style="left:0;top:100px;width:71px;height:19px;background:#fff">不良品率</div><div class="cell" style="left:72px;top:100px;width:56px;height:19px;background:#fff">3.23%</div><div class="cell" style="left:0;top:120px;width:71px;height:19px;background:#fff">OP不良数</div><div class="cell" style="left:72px;top:120px;width:56px;height:19px;background:#fff">0</div><div class="cell" style="left:0;top:140px;width:71px;height:19px;background:#fff">RLP不良数</div><div class="cell" style="left:72px;top:140px;width:56px;height:19px;background:#fff">0</div><div class="cell" style="left:0;top:160px;width:71px;height:19px;background:#fff">DT不良数</div><div class="cell" style="left:72px;top:160px;width:56px;height:19px;background:#fff">0</div><div class="cell" style="left:0;top:180px;width:71px;height:19px;background:#fff">TTP不良数</div><div class="cell" style="left:72px;top:180px;width:56px;height:19px;background:#fff">0</div><div style="left:128px;top:0;width:18px;height:196px;background:#b0b0b0;border-left:1px solid #7e7e7e"></div><div style="left:129px;top:0;width:17px;height:17px;background:#d2d2d2;border:1px solid;border-color:#ededed #808080 #808080 #ededed"></div><div style="left:129px;top:180px;width:17px;height:16px;background:#d2d2d2;border:1px solid;border-color:#ededed #808080 #808080 #ededed"></div><div style="left:129px;top:17px;width:17px;height:92px;background:linear-gradient(to right,#dadada 0,#c6c6c6 35%,#b0b0b0 70%,#8a8a8a 100%);border-bottom:2px solid #787878;border-top:1px solid #e8e8e8"></div><svg style="left:129px;top:0" width="17" height="196"><path d="M8.500 4.500 L11.700 11.500 H5.300Z" fill="#000"/><path d="M8.500 191.5 L11.700 184.5 H5.300Z" fill="#000"/></svg></div>
<div style="left:1271px;top:497px;width:154px;height:204px;border:4px solid;border-color:#8f99b8 #c3cbe1 #c3cbe1 #8f99b8"></div>
<div style="left:1274px;top:500px;width:148px;height:198px;border:1px solid;border-color:#7c86a6 #d0d6e8 #d0d6e8 #7c86a6"></div>
<div style="left:1275px;top:501px;width:146px;height:196px;background:#8a8a8a;overflow:hidden"><div class="hdr" style="left:0;top:0;width:72px;height:19px">统计项</div><div class="hdr" style="left:72px;top:0;width:57px;height:19px">结果</div><div class="cell" style="left:0;top:20px;width:71px;height:19px;background:#fff">测试总数</div><div class="cell" style="left:72px;top:20px;width:56px;height:19px;background:#fff">31</div><div class="cell" style="left:0;top:40px;width:71px;height:19px;background:#fff">良品总数</div><div class="cell" style="left:72px;top:40px;width:56px;height:19px;background:#fff">30</div><div class="cell" style="left:0;top:60px;width:71px;height:19px;background:#fff">良品率</div><div class="cell" style="left:72px;top:60px;width:56px;height:19px;background:#fff">96.77%</div><div class="cell" style="left:0;top:80px;width:71px;height:19px;background:#fff">不良品总数</div><div class="cell" style="left:72px;top:80px;width:56px;height:19px;background:#fff">1</div><div class="cell" style="left:0;top:100px;width:71px;height:19px;background:#fff">不良品率</div><div class="cell" style="left:72px;top:100px;width:56px;height:19px;background:#fff">3.23%</div><div class="cell" style="left:0;top:120px;width:71px;height:19px;background:#fff">OP不良数</div><div class="cell" style="left:72px;top:120px;width:56px;height:19px;background:#fff">0</div><div class="cell" style="left:0;top:140px;width:71px;height:19px;background:#fff">RLP不良数</div><div class="cell" style="left:72px;top:140px;width:56px;height:19px;background:#fff">0</div><div class="cell" style="left:0;top:160px;width:71px;height:19px;background:#fff">DT不良数</div><div class="cell" style="left:72px;top:160px;width:56px;height:19px;background:#fff">0</div><div class="cell" style="left:0;top:180px;width:71px;height:19px;background:#fff">TTP不良数</div><div class="cell" style="left:72px;top:180px;width:56px;height:19px;background:#fff">0</div><div style="left:128px;top:0;width:18px;height:196px;background:#b0b0b0;border-left:1px solid #7e7e7e"></div><div style="left:129px;top:0;width:17px;height:17px;background:#d2d2d2;border:1px solid;border-color:#ededed #808080 #808080 #ededed"></div><div style="left:129px;top:180px;width:17px;height:16px;background:#d2d2d2;border:1px solid;border-color:#ededed #808080 #808080 #ededed"></div><div style="left:129px;top:17px;width:17px;height:92px;background:linear-gradient(to right,#dadada 0,#c6c6c6 35%,#b0b0b0 70%,#8a8a8a 100%);border-bottom:2px solid #787878;border-top:1px solid #e8e8e8"></div><svg style="left:129px;top:0" width="17" height="196"><path d="M8.500 4.500 L11.700 11.500 H5.300Z" fill="#000"/><path d="M8.500 191.5 L11.700 184.5 H5.300Z" fill="#000"/></svg></div>
<div class="t" style="left:37px;top:737.5px;font-size:16px;line-height:20px;">当前用户</div>
<div class="t" style="left:37px;top:771.5px;font-size:16px;line-height:20px;">产品类型</div>
<div style="left:105px;top:734px;width:129px;height:25px;background:#f0f0f0;border:1px solid #dadada;border-top-color:#c8c8c8"></div>
<div style="left:105px;top:768px;width:129px;height:25px;background:#f0f0f0;border:1px solid #dadada;border-top-color:#c8c8c8"></div>
<div class="t" style="left:109px;top:736.5px;font-size:16px;line-height:20px;font-weight:bold">admin</div>
<div class="t" style="left:109px;top:770.5px;font-size:16px;line-height:20px;font-weight:bold;color:#0033dd">83161058</div>
<div style="left:255px;top:734px;width:134px;height:62px;border:3px solid;border-color:#8a94b5 #bec6e0 #bec6e0 #8a94b5"></div>
<div style="left:258px;top:737px;width:128px;height:56px;overflow:hidden;background:radial-gradient(ellipse 24px 8px at 24px 13px,rgba(255,255,255,.62) 0,rgba(255,255,255,.3) 55%,rgba(255,255,255,0) 100%),linear-gradient(to bottom,rgba(0,70,0,0) 72%,rgba(0,70,0,.16) 88%,rgba(0,70,0,.32) 100%),linear-gradient(to right,rgba(0,70,0,0) 82%,rgba(0,70,0,.12) 92%,rgba(0,70,0,.26) 100%),radial-gradient(ellipse 154px 67px at 26px 11px,#66ff22 0,#58fa12 40%,#4fea0e 68%,#3cc408 88%,#2a9e02 100%)"></div>
<div class="tc" style="left:258px;top:753px;width:128px;height:28px;line-height:28px;font-size:19px;text-indent:-7px">初始化完成</div>
<div class="t" style="left:406px;top:716.0px;font-size:14px;line-height:18px;">电阻测试值</div>
<div style="left:405px;top:737px;width:558px;height:68px;border:4px solid;border-color:#8f99b8 #c3cbe1 #c3cbe1 #8f99b8"></div>
<div style="left:408px;top:740px;width:552px;height:62px;border:1px solid;border-color:#7c86a6 #d0d6e8 #d0d6e8 #7c86a6"></div>
<div style="left:409px;top:741px;width:550px;height:60px;background:#8a8a8a"></div>
<div class="hdr" style="left:409px;top:741px;width:70px;height:19px"></div>
<div class="hdr" style="left:409px;top:761px;width:70px;height:19px">电阻值mΩ</div>
<div class="hdr" style="left:409px;top:781px;width:70px;height:19px">结果</div>
<div class="hdr" style="left:479px;top:741px;width:81px;height:19px">1# RcNC</div>
<div class="cell" style="left:479px;top:761px;width:80px;height:19px;background:#66ff00">22.914</div>
<div class="cell" style="left:479px;top:781px;width:80px;height:19px;background:#66ff00">OK</div>
<div class="hdr" style="left:560px;top:741px;width:79px;height:19px">1# RcNO</div>
<div class="cell" style="left:560px;top:761px;width:78px;height:19px;background:#66ff00">21.516</div>
<div class="cell" style="left:560px;top:781px;width:78px;height:19px;background:#66ff00">OK</div>
<div class="hdr" style="left:639px;top:741px;width:78px;height:19px">2# RcNC</div>
<div class="cell" style="left:639px;top:761px;width:77px;height:19px;background:#66ff00">23.419</div>
<div class="cell" style="left:639px;top:781px;width:77px;height:19px;background:#66ff00">OK</div>
<div class="hdr" style="left:717px;top:741px;width:83px;height:19px">2# RcNO</div>
<div class="cell" style="left:717px;top:761px;width:82px;height:19px;background:#66ff00">28.502</div>
<div class="cell" style="left:717px;top:781px;width:82px;height:19px;background:#66ff00">OK</div>
<div class="hdr" style="left:800px;top:741px;width:80px;height:19px">3# RcNC</div>
<div class="cell" style="left:800px;top:761px;width:79px;height:19px;background:#66ff00">23.230</div>
<div class="cell" style="left:800px;top:781px;width:79px;height:19px;background:#66ff00">OK</div>
<div class="hdr" style="left:880px;top:741px;width:79px;height:19px">3# RcNO</div>
<div class="cell" style="left:880px;top:761px;width:78px;height:19px;background:#66ff00">188.129</div>
<div class="cell" style="left:880px;top:781px;width:78px;height:19px;background:#66ff00">OK</div>
<div class="t" style="left:985px;top:712.5px;font-size:13px;line-height:17px;">报警信息</div>
<div style="left:984px;top:733px;width:277px;height:72px;border:4px solid;border-color:#8f99b8 #c3cbe1 #c3cbe1 #8f99b8"></div>
<div style="left:987px;top:736px;width:271px;height:66px;border:1px solid;border-color:#7c86a6 #d0d6e8 #d0d6e8 #7c86a6"></div>
<div style="left:988px;top:737px;width:269px;height:64px;background:#d3d3d3"></div>
<div style="left:1239px;top:737px;width:18px;height:64px;background:#f0f0f0;border-left:1px solid #e4e4e4"></div>
<svg style="left:1239px;top:737px" width="18" height="64"><path d="M5 11.500 L9 7.500 L13 11.500Z" fill="#404040"/><path d="M5 52.500 L9 56.500 L13 52.500Z" fill="#404040"/></svg>
<div style="left:1287px;top:725px;width:116px;height:37px;border:1px solid #3c3c3c;background:linear-gradient(to bottom,#ecffec 0,#e0f9e0 4px,#daf5da 40%,#cfeccf 75%,#bddabd 30px,#8fae8f 34px,#86a486 100%)"><div style="left:0;top:0;width:114px;height:35px;background:linear-gradient(to right,rgba(90,120,90,.5) 0,rgba(120,150,120,.25) 3px,rgba(255,255,255,0) 7px,rgba(255,255,255,0) 104px,rgba(70,100,70,.35) 109px,rgba(60,90,60,.6) 100%)"></div><div class="tc" style="left:0;top:0;width:114px;height:35px;line-height:35px;font-size:13px">统计清零</div></div>
<div style="left:1287px;top:764px;width:116px;height:37px;border:1px solid #3c3c3c;background:linear-gradient(to bottom,#ecffec 0,#e0f9e0 4px,#daf5da 40%,#cfeccf 75%,#bddabd 30px,#8fae8f 34px,#86a486 100%)"><div style="left:0;top:0;width:114px;height:35px;background:linear-gradient(to right,rgba(90,120,90,.5) 0,rgba(120,150,120,.25) 3px,rgba(255,255,255,0) 7px,rgba(255,255,255,0) 104px,rgba(70,100,70,.35) 109px,rgba(60,90,60,.6) 100%)"></div><div class="tc" style="left:0;top:0;width:114px;height:35px;line-height:35px;font-size:13px">清除报警</div></div>
</body></html>
